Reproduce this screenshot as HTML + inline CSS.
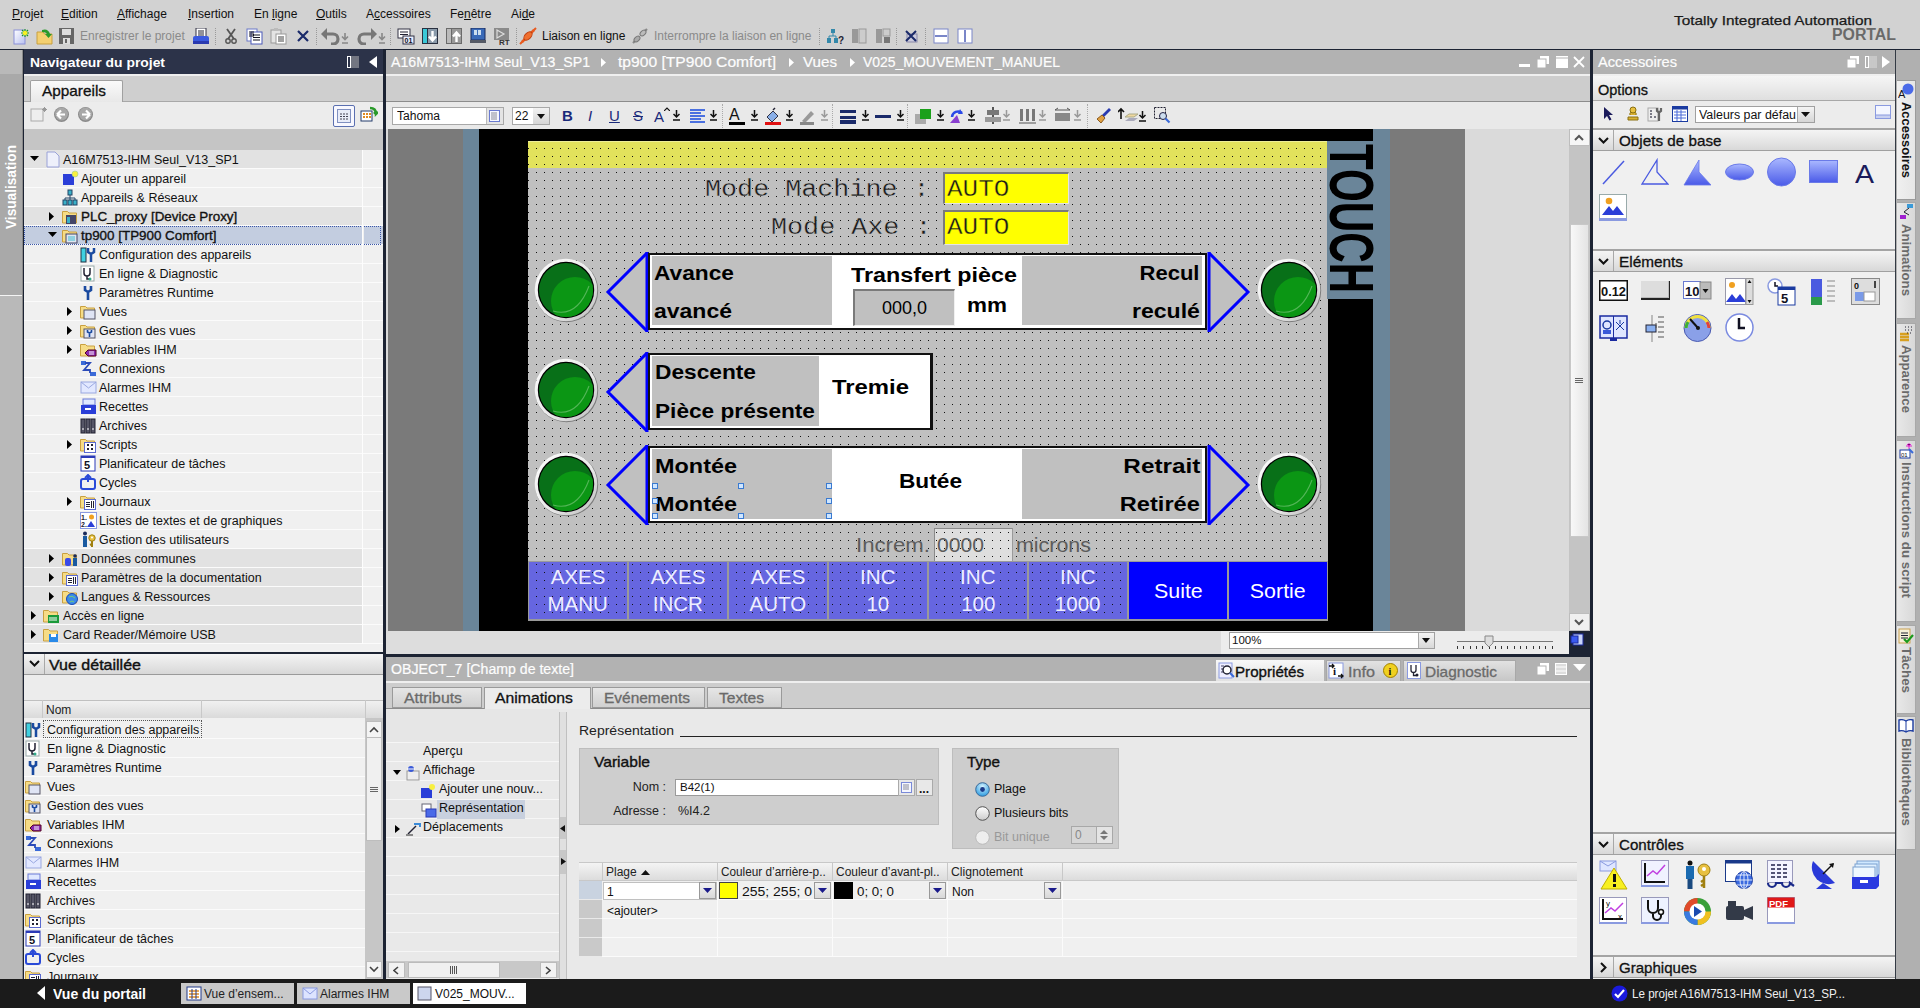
<!DOCTYPE html>
<html><head><meta charset="utf-8">
<style>
*{margin:0;padding:0;box-sizing:border-box}
html,body{width:1920px;height:1008px;overflow:hidden;background:#d2d2d2;font-family:"Liberation Sans",sans-serif;font-size:12px;color:#000;position:relative}
.a{position:absolute}
.t{position:absolute;white-space:nowrap;line-height:1}
.dots{background-image:radial-gradient(circle at 1px 1px,#111 0.9px,transparent 1.1px);background-size:8px 8px}
</style></head><body>

<div class="a" style="left:0px;top:0px;width:1920px;height:49px;background:#d2d2d2;"></div>
<div class="a" style="left:0px;top:49px;width:1920px;height:930px;background:#1c2333;"></div>
<div class="t" style="left:12.00px;top:7.80px;font-size:12px;color:#101010;">Projet</div>
<div class="a" style="left:12px;top:19px;width:8px;height:1px;background:#101010;"></div>
<div class="t" style="left:61.00px;top:7.80px;font-size:12px;color:#101010;">Edition</div>
<div class="a" style="left:61px;top:19px;width:8px;height:1px;background:#101010;"></div>
<div class="t" style="left:117.00px;top:7.80px;font-size:12px;color:#101010;">Affichage</div>
<div class="a" style="left:117px;top:19px;width:8px;height:1px;background:#101010;"></div>
<div class="t" style="left:188.00px;top:7.80px;font-size:12px;color:#101010;">Insertion</div>
<div class="a" style="left:188px;top:19px;width:3px;height:1px;background:#101010;"></div>
<div class="t" style="left:254.00px;top:7.80px;font-size:12px;color:#101010;">En ligne</div>
<div class="a" style="left:272px;top:19px;width:3px;height:1px;background:#101010;"></div>
<div class="t" style="left:316.00px;top:7.80px;font-size:12px;color:#101010;">Outils</div>
<div class="a" style="left:316px;top:19px;width:9px;height:1px;background:#101010;"></div>
<div class="t" style="left:366.00px;top:7.80px;font-size:12px;color:#101010;">Accessoires</div>
<div class="a" style="left:374px;top:19px;width:6px;height:1px;background:#101010;"></div>
<div class="t" style="left:450.00px;top:7.80px;font-size:12px;color:#101010;">Fenêtre</div>
<div class="a" style="left:464px;top:19px;width:7px;height:1px;background:#101010;"></div>
<div class="t" style="left:511.00px;top:7.80px;font-size:12px;color:#101010;">Aide</div>
<div class="a" style="left:522px;top:19px;width:7px;height:1px;background:#101010;"></div>
<svg class="a" style="left:13px;top:28px;" width="17" height="17" viewBox="0 0 17 17"><defs><linearGradient id="dg" x1="0" y1="0" x2="1" y2="1"><stop offset="0" stop-color="#fff"/><stop offset="1" stop-color="#b8c0f0"/></linearGradient></defs><rect x="1" y="2" width="11" height="14" fill="url(#dg)" stroke="#8a90d8"/><path d="M12 1v8M8 5h8M9 2l6 6M15 2l-6 6" stroke="#1a9a1a" stroke-width="1.1"/><circle cx="12" cy="5" r="2.3" fill="#f8f020"/></svg>
<svg class="a" style="left:36px;top:27px;" width="18" height="18" viewBox="0 0 18 18"><path d="M1 5h6l1.5 2H16v10H1z" fill="#f4d070" stroke="#c8a040"/><path d="M6 3q6-2 8 4h2l-3.5 4L9 7h2q-1-2-5-2z" fill="#2a9a2a"/></svg>
<svg class="a" style="left:59px;top:28px;" width="15" height="16" viewBox="0 0 15 16"><rect x="0" y="0" width="15" height="16" fill="#666"/><rect x="3" y="1" width="9" height="6" fill="#ddd"/><rect x="4" y="10" width="7" height="6" fill="#ddd"/><rect x="6" y="11" width="2" height="4" fill="#666"/></svg>
<div class="t" style="left:80.00px;top:30.30px;font-size:12px;color:#8a8a8a;">Enregistrer le projet</div>
<svg class="a" style="left:193px;top:28px;" width="16" height="16" viewBox="0 0 16 16"><rect x="3" y="0" width="10" height="9" fill="#fff" stroke="#334"/><path d="M5 3h6M5 5h6M5 7h6" stroke="#223"/><path d="M0 10q0-2 2-2h12q2 0 2 2v4H0z" fill="#3a5ae0"/><rect x="0" y="13" width="16" height="3" fill="#2a3ab0"/></svg>
<div class="a" style="left:215px;top:28px;width:1px;height:17px;border-left:1px dotted #9a9a9a"></div>
<svg class="a" style="left:224px;top:28px;" width="14" height="16" viewBox="0 0 14 16"><path d="M3 1l7 10M11 1L4 11" stroke="#555" stroke-width="1.8"/><circle cx="4" cy="13" r="2.2" fill="none" stroke="#555" stroke-width="1.4"/><circle cx="10" cy="13" r="2.2" fill="none" stroke="#555" stroke-width="1.4"/></svg>
<svg class="a" style="left:246px;top:28px;" width="17" height="17" viewBox="0 0 17 17"><rect x="1" y="1" width="10" height="12" fill="#fff" stroke="#6a78c8"/><rect x="5" y="4" width="11" height="12" fill="#fff" stroke="#4a58b8"/><path d="M3 4h5M3 6h5M3 8h5M7 7h7M7 9.5h7M7 12h7" stroke="#112" stroke-width="1.2"/></svg>
<svg class="a" style="left:270px;top:27px;" width="17" height="18" viewBox="0 0 17 18"><rect x="1" y="3" width="10" height="13" fill="#e4e4e4" stroke="#999"/><rect x="4" y="1" width="4" height="3" fill="#bbb"/><rect x="6" y="7" width="10" height="10" fill="#fff" stroke="#999"/><path d="M8 10h6M8 12h6M8 14h6" stroke="#444"/></svg>
<svg class="a" style="left:296px;top:29px;" width="14" height="14" viewBox="0 0 14 14"><path d="M2 2l10 10M12 2L2 12" stroke="#1a2a6a" stroke-width="2.2"/></svg>
<div class="a" style="left:316px;top:28px;width:1px;height:17px;border-left:1px dotted #9a9a9a"></div>
<svg class="a" style="left:321px;top:27px;" width="30" height="18" viewBox="0 0 30 18"><path d="M4 7h8a5 5 0 010 10h-2" fill="none" stroke="#777" stroke-width="3.2"/><path d="M0 7l6-6v12z" fill="#777"/><path d="M24 6v6M21 9.5l3 3 3-3M21 16h6" stroke="#888" stroke-width="1.6" fill="none"/></svg>
<svg class="a" style="left:356px;top:27px;" width="30" height="18" viewBox="0 0 30 18"><path d="M16 7H8a5 5 0 000 10h2" fill="none" stroke="#777" stroke-width="3.2"/><path d="M21 7l-6-6v12z" fill="#777"/><path d="M26 6v6M23 9.5l3 3 3-3M23 16h6" stroke="#888" stroke-width="1.6" fill="none"/></svg>
<div class="a" style="left:390px;top:28px;width:1px;height:17px;border-left:1px dotted #9a9a9a"></div>
<svg class="a" style="left:397px;top:28px;" width="18" height="17" viewBox="0 0 18 17"><rect x="1" y="1" width="12" height="9" fill="#fff" stroke="#334"/><path d="M3 4h8M3 6.5h8" stroke="#223" stroke-width="1.2"/><rect x="6" y="8" width="11" height="8" fill="#e8eeff" stroke="#334"/><text x="7.5" y="15" font-size="7" font-weight="bold" fill="#112" font-family="Liberation Sans">01</text></svg>
<svg class="a" style="left:422px;top:28px;" width="16" height="16" viewBox="0 0 16 16"><rect x="0" y="0" width="16" height="16" fill="#2a3040"/><rect x="1" y="1" width="4" height="14" fill="#3ac8d8"/><rect x="6" y="1" width="9" height="14" fill="#8a9aaa"/><path d="M10.5 3v9M7 8.5l3.5 4 3.5-4" stroke="#fff" stroke-width="2.4" fill="none"/></svg>
<svg class="a" style="left:446px;top:28px;" width="16" height="16" viewBox="0 0 16 16"><rect x="0" y="0" width="16" height="16" fill="#6a6a6a"/><rect x="1" y="1" width="4" height="14" fill="#bbb"/><rect x="6" y="1" width="9" height="14" fill="#999"/><path d="M10.5 14V5M7 8.5l3.5-4 3.5 4" stroke="#fff" stroke-width="2.4" fill="none"/></svg>
<svg class="a" style="left:470px;top:28px;" width="16" height="16" viewBox="0 0 16 16"><rect x="1" y="0" width="14" height="12" fill="#3a6ab8" stroke="#1a2a5a"/><rect x="4" y="2" width="3" height="5" fill="#cde"/><rect x="8" y="2" width="3" height="5" fill="#cde"/><rect x="0" y="12" width="16" height="3" fill="#555a66"/></svg>
<svg class="a" style="left:494px;top:28px;" width="16" height="17" viewBox="0 0 16 17"><rect x="0" y="0" width="15" height="12" fill="#8a8a8a"/><path d="M3 2l7 4-7 4z" fill="none" stroke="#ddd" stroke-width="1.2"/><text x="5" y="16.5" font-size="8" font-weight="bold" fill="#333" font-family="Liberation Sans">RT</text></svg>
<div class="a" style="left:516px;top:28px;width:1px;height:17px;border-left:1px dotted #9a9a9a"></div>
<svg class="a" style="left:519px;top:27px;" width="18" height="18" viewBox="0 0 18 18"><path d="M3 15l12-12" stroke="#e85a20" stroke-width="2.5"/><ellipse cx="9" cy="9" rx="5" ry="3" transform="rotate(-45 9 9)" fill="#f07030" stroke="#c04010"/><path d="M1 17l3-3M14 4l3-3" stroke="#e85a20" stroke-width="2"/></svg>
<div class="t" style="left:542.00px;top:30.30px;font-size:12px;color:#101010;">Liaison en ligne</div>
<svg class="a" style="left:631px;top:27px;" width="18" height="18" viewBox="0 0 18 18"><path d="M2 16l5-5M11 7l5-5" stroke="#888" stroke-width="2.2"/><ellipse cx="6" cy="12" rx="3.5" ry="2.2" transform="rotate(-45 6 12)" fill="#aaa" stroke="#777"/><ellipse cx="12" cy="6" rx="3.5" ry="2.2" transform="rotate(-45 12 6)" fill="#bbb" stroke="#777"/></svg>
<div class="t" style="left:654.00px;top:30.30px;font-size:12px;color:#8a8a8a;">Interrompre la liaison en ligne</div>
<div class="a" style="left:819px;top:28px;width:1px;height:17px;border-left:1px dotted #9a9a9a"></div>
<svg class="a" style="left:826px;top:28px;" width="20" height="17" viewBox="0 0 20 17"><rect x="5" y="1" width="4" height="4" fill="#38a"/><rect x="1" y="10" width="4" height="5" fill="#38a"/><rect x="8" y="10" width="4" height="5" fill="#38a"/><path d="M7 5v3M3 8h7v2M3 8v2" stroke="#38a" fill="none"/><text x="12" y="16" font-size="10" font-weight="bold" fill="#223" font-family="Liberation Sans">?</text></svg>
<svg class="a" style="left:851px;top:28px;" width="16" height="16" viewBox="0 0 16 16"><rect x="1" y="1" width="6" height="14" fill="#999"/><rect x="8" y="1" width="7" height="14" fill="#ccc" stroke="#999"/></svg>
<svg class="a" style="left:875px;top:28px;" width="16" height="16" viewBox="0 0 16 16"><rect x="1" y="1" width="6" height="14" fill="#999"/><rect x="8" y="1" width="7" height="7" fill="#ccc" stroke="#999"/><rect x="9" y="9" width="6" height="6" fill="#777"/></svg>
<div class="a" style="left:896px;top:28px;width:1px;height:17px;border-left:1px dotted #9a9a9a"></div>
<svg class="a" style="left:904px;top:28px;" width="16" height="16" viewBox="0 0 16 16"><rect x="3" y="6" width="10" height="8" fill="#ccd" stroke="#88a"/><path d="M2 3l10 10M12 3L2 13" stroke="#1a2a6a" stroke-width="2"/></svg>
<div class="a" style="left:925px;top:28px;width:1px;height:17px;border-left:1px dotted #9a9a9a"></div>
<svg class="a" style="left:933px;top:28px;" width="16" height="16" viewBox="0 0 16 16"><rect x="1" y="1" width="14" height="14" fill="#fff" stroke="#7a86c8"/><rect x="2" y="7" width="12" height="2" fill="#7a86c8"/></svg>
<svg class="a" style="left:957px;top:28px;" width="16" height="16" viewBox="0 0 16 16"><rect x="1" y="1" width="14" height="14" fill="#fff" stroke="#7a86c8"/><rect x="7" y="2" width="2" height="12" fill="#7a86c8"/></svg>
<div class="t" style="left:1674.00px;top:13.95px;font-size:13px;color:#1a1a1a;-webkit-text-stroke:0.25px #1a1a1a;transform:scaleX(1.1809);transform-origin:left top;">Totally Integrated Automation</div>
<div class="t" style="left:1831.50px;top:27.40px;font-size:16px;color:#6a6a6a;font-weight:bold;transform:scaleX(0.9909);transform-origin:left top;">PORTAL</div>
<div class="a" style="left:0px;top:50px;width:23px;height:929px;background:#b9b9b9;"></div>
<div class="a" style="left:0px;top:74px;width:23px;height:1px;background:#f4f4f4;"></div>
<div class="a" style="left:0px;top:74px;width:22px;height:221px;background:#a9a9a9;"></div>
<div class="a" style="left:0px;top:295px;width:23px;height:1px;background:#f4f4f4;"></div>
<div class="t" style="left:4.3px;top:229px;font-size:14px;font-weight:bold;color:#fff;transform:rotate(-90deg) scaleX(0.9755);transform-origin:left top;">Visualisation</div>
<div class="a" style="left:22px;top:50px;width:1px;height:929px;background:#8a8a8a;"></div>
<div class="a" style="left:24px;top:49px;width:359px;height:25px;background:#2c3349;"></div>
<div class="t" style="left:30.00px;top:55.52px;font-size:13.5px;color:#ffffff;font-weight:bold;transform:scaleX(1.0284);transform-origin:left top;">Navigateur du projet</div>
<svg class="a" style="left:347px;top:56px;" width="12" height="12" viewBox="0 0 12 12"><rect x="0.5" y="0.5" width="3" height="11" fill="none" stroke="#fff"/><path d="M5 0v12M7 0v12M9 0v12M11 0v12" stroke="#bbb"/></svg>
<svg class="a" style="left:369px;top:56px;" width="8" height="12" viewBox="0 0 8 12"><path d="M8 0v12L0 6z" fill="#fff"/></svg>
<div class="a" style="left:24px;top:74px;width:359px;height:2px;background:#eeeeee;"></div>
<div class="a" style="left:24px;top:76px;width:359px;height:25px;background:#cfcfcf;"></div>
<div class="a" style="left:30px;top:80px;width:93px;height:22px;background:#ececec;border:1px solid #a0a0a0;border-bottom:none;border-radius:2px 2px 0 0;background:linear-gradient(#fafafa,#e8e8e8)"></div>
<div class="t" style="left:42.00px;top:83.67px;font-size:14.5px;color:#111;-webkit-text-stroke:0.3px #111;transform:scaleX(1.0588);transform-origin:left top;">Appareils</div>
<div class="a" style="left:24px;top:101px;width:6px;height:1px;background:#a8a8a8;"></div>
<div class="a" style="left:123px;top:101px;width:260px;height:1px;background:#a8a8a8;"></div>
<div class="a" style="left:24px;top:102px;width:359px;height:27px;background:#ececec;"></div>
<svg class="a" style="left:30px;top:106px;" width="18" height="17" viewBox="0 0 18 17"><rect x="1" y="3" width="12" height="12" fill="#eee" stroke="#aaa"/><path d="M13 2l3 3M16 2l-3 3M14.5 1v5M12 3.5h5" stroke="#999"/></svg>
<svg class="a" style="left:53px;top:106px;" width="17" height="17" viewBox="0 0 17 17"><circle cx="8.5" cy="8.5" r="7.5" fill="#8a8a8a"/><circle cx="8.5" cy="8" r="6.5" fill="#a8a8a8"/><path d="M4 8.5h8M4 8.5l4-4M4 8.5l4 4" stroke="#fff" stroke-width="2.2" fill="none"/></svg>
<svg class="a" style="left:77px;top:106px;" width="17" height="17" viewBox="0 0 17 17"><circle cx="8.5" cy="8.5" r="7.5" fill="#8a8a8a"/><circle cx="8.5" cy="8" r="6.5" fill="#a8a8a8"/><path d="M13 8.5H5M13 8.5l-4-4M13 8.5l-4 4" stroke="#fff" stroke-width="2.2" fill="none"/></svg>
<div class="a" style="left:333px;top:105px;width:22px;height:22px;background:#f8f8ff;border:1px solid #5a6fb0;border-radius:2px"></div>
<svg class="a" style="left:337px;top:109px;" width="14" height="14" viewBox="0 0 14 14"><rect x="0.5" y="0.5" width="13" height="13" fill="#e8ecf8" stroke="#8090c0"/><path d="M3 5h8M3 7.5h8M3 10h8" stroke="#445" stroke-dasharray="2 1"/></svg>
<svg class="a" style="left:360px;top:106px;" width="18" height="17" viewBox="0 0 18 17"><rect x="1" y="5" width="11" height="10" fill="#fff" stroke="#223a6a"/><path d="M3 8h2M6 8h2M9 8h2M3 11h2M6 11h2M9 11h2" stroke="#e08a20" stroke-width="2"/><path d="M10 2q6 0 6 6l2-2M16 8l-2-2" stroke="#2a9a2a" stroke-width="2.5" fill="none"/></svg>
<div class="a" style="left:24px;top:129px;width:359px;height:21px;background:#c5c5c5;"></div>
<div class="a" style="left:24px;top:150px;width:359px;height:502px;background:#f0f0f0;"></div>
<div class="a" style="left:24px;top:150px;width:338px;height:18px;background:#e2e2e2;"></div>
<div class="a" style="left:364px;top:150px;width:19px;height:18px;background:#f0f0f0;"></div>
<div class="a" style="left:24px;top:168px;width:359px;height:1px;background:#fbfbfb;"></div>
<svg class="a" style="left:30px;top:156px;" width="9" height="6" viewBox="0 0 9 6"><path d="M0 0h9L4.5 5z" fill="#000"/></svg>
<svg class="a" style="left:46px;top:151px;" width="14" height="17" viewBox="0 0 14 17"><path d="M1 1h8l4 4v11H1z" fill="#eef0fb" stroke="#9aa2d8"/></svg>
<div class="t" style="left:63.00px;top:153.88px;font-size:12.5px;color:#111;">A16M7513-IHM Seul_V13_SP1</div>
<div class="a" style="left:24px;top:169px;width:338px;height:18px;background:#f0f0f0;"></div>
<div class="a" style="left:364px;top:169px;width:19px;height:18px;background:#f0f0f0;"></div>
<div class="a" style="left:24px;top:187px;width:359px;height:1px;background:#fbfbfb;"></div>
<svg class="a" style="left:62px;top:170px;" width="17" height="17" viewBox="0 0 17 17"><rect x="1" y="4" width="11" height="11" fill="#2a3ed8"/><circle cx="13" cy="4" r="3" fill="#f8f040" stroke="#9c9" stroke-width="0.6"/></svg>
<div class="t" style="left:81.00px;top:172.88px;font-size:12.5px;color:#111;">Ajouter un appareil</div>
<div class="a" style="left:24px;top:188px;width:338px;height:18px;background:#f0f0f0;"></div>
<div class="a" style="left:364px;top:188px;width:19px;height:18px;background:#f0f0f0;"></div>
<div class="a" style="left:24px;top:206px;width:359px;height:1px;background:#fbfbfb;"></div>
<svg class="a" style="left:62px;top:189px;" width="17" height="17" viewBox="0 0 17 17"><rect x="6" y="1" width="4" height="5" fill="#3ab0c8" stroke="#246"/><path d="M8 6v3M3 9h10M3 9v2M8 9v2M13 9v2" stroke="#246"/><rect x="1" y="11" width="4" height="5" fill="#3ab0c8" stroke="#246"/><rect x="6" y="11" width="4" height="5" fill="#3ab0c8" stroke="#246"/><rect x="11" y="11" width="4" height="5" fill="#3ab0c8" stroke="#246"/></svg>
<div class="t" style="left:81.00px;top:191.88px;font-size:12.5px;color:#111;">Appareils &amp; Réseaux</div>
<div class="a" style="left:24px;top:207px;width:338px;height:18px;background:#e2e2e2;"></div>
<div class="a" style="left:364px;top:207px;width:19px;height:18px;background:#f0f0f0;"></div>
<div class="a" style="left:24px;top:225px;width:359px;height:1px;background:#fbfbfb;"></div>
<svg class="a" style="left:49px;top:212px;" width="6" height="9" viewBox="0 0 6 9"><path d="M0 0v9L5 4.5z" fill="#000"/></svg>
<svg class="a" style="left:62px;top:208px;" width="17" height="17" viewBox="0 0 17 17"><path d="M0.5 3.5h5l1.5 1.5h7.5v10h-14z" fill="#f6dc86" stroke="#c9a040"/><rect x="4" y="7" width="10" height="9" fill="#446"/><rect x="5" y="9" width="3" height="6" fill="#3ab0c8"/></svg>
<div class="t" style="left:81.00px;top:210.11px;font-size:13.4px;color:#111;-webkit-text-stroke:0.35px #111;">PLC_proxy [Device Proxy]</div>
<div class="a" style="left:24px;top:226px;width:338px;height:18px;background:#c3cde0;"></div>
<div class="a" style="left:364px;top:226px;width:19px;height:18px;background:#c3cde0;"></div>
<div class="a" style="left:24px;top:244px;width:359px;height:1px;background:#fbfbfb;"></div>
<div class="a" style="left:24px;top:226px;width:357px;height:19px;border:1px dotted #3a56a8"></div>
<svg class="a" style="left:48px;top:232px;" width="9" height="6" viewBox="0 0 9 6"><path d="M0 0h9L4.5 5z" fill="#000"/></svg>
<svg class="a" style="left:62px;top:227px;" width="17" height="17" viewBox="0 0 17 17"><path d="M0.5 3.5h5l1.5 1.5h7.5v10h-14z" fill="#f6dc86" stroke="#c9a040"/><rect x="4" y="7" width="11" height="9" fill="#dfe6f0" stroke="#446"/><rect x="6" y="9" width="7" height="5" fill="#8fd0e0"/></svg>
<div class="t" style="left:81.00px;top:229.11px;font-size:13.4px;color:#111;-webkit-text-stroke:0.35px #111;">tp900 [TP900 Comfort]</div>
<div class="a" style="left:24px;top:245px;width:338px;height:18px;background:#f0f0f0;"></div>
<div class="a" style="left:364px;top:245px;width:19px;height:18px;background:#f0f0f0;"></div>
<div class="a" style="left:24px;top:263px;width:359px;height:1px;background:#fbfbfb;"></div>
<svg class="a" style="left:80px;top:246px;" width="17" height="17" viewBox="0 0 17 17"><rect x="1" y="2" width="5" height="14" fill="#40d0e0" stroke="#234"/><path d="M11 16V7M8 2v4l3 2 3-2V2" stroke="#1a4aa0" stroke-width="2.5" fill="none"/></svg>
<div class="t" style="left:99.00px;top:248.88px;font-size:12.5px;color:#111;">Configuration des appareils</div>
<div class="a" style="left:24px;top:264px;width:338px;height:18px;background:#f0f0f0;"></div>
<div class="a" style="left:364px;top:264px;width:19px;height:18px;background:#f0f0f0;"></div>
<div class="a" style="left:24px;top:282px;width:359px;height:1px;background:#fbfbfb;"></div>
<svg class="a" style="left:80px;top:265px;" width="17" height="17" viewBox="0 0 17 17"><rect x="1" y="1" width="13" height="15" fill="#fff" stroke="#9aa"/><path d="M4 3v5a3 3 0 006 0V3M7 11v3h3" stroke="#223" stroke-width="1.5" fill="none"/><circle cx="10" cy="14" r="1.5" fill="#3a8"/></svg>
<div class="t" style="left:99.00px;top:267.88px;font-size:12.5px;color:#111;">En ligne &amp; Diagnostic</div>
<div class="a" style="left:24px;top:283px;width:338px;height:18px;background:#f0f0f0;"></div>
<div class="a" style="left:364px;top:283px;width:19px;height:18px;background:#f0f0f0;"></div>
<div class="a" style="left:24px;top:301px;width:359px;height:1px;background:#fbfbfb;"></div>
<svg class="a" style="left:80px;top:284px;" width="17" height="17" viewBox="0 0 17 17"><path d="M8 16V8M5 2v4l3 2 3-2V2" stroke="#1a4aa0" stroke-width="2.6" fill="none"/></svg>
<div class="t" style="left:99.00px;top:286.88px;font-size:12.5px;color:#111;">Paramètres Runtime</div>
<div class="a" style="left:24px;top:302px;width:338px;height:18px;background:#f0f0f0;"></div>
<div class="a" style="left:364px;top:302px;width:19px;height:18px;background:#f0f0f0;"></div>
<div class="a" style="left:24px;top:320px;width:359px;height:1px;background:#fbfbfb;"></div>
<svg class="a" style="left:67px;top:307px;" width="6" height="9" viewBox="0 0 6 9"><path d="M0 0v9L5 4.5z" fill="#000"/></svg>
<svg class="a" style="left:80px;top:303px;" width="17" height="17" viewBox="0 0 17 17"><path d="M0.5 3.5h5l1.5 1.5h7.5v10h-14z" fill="#f6dc86" stroke="#c9a040"/><rect x="4" y="7" width="11" height="9" fill="#dfe4f4" stroke="#556"/></svg>
<div class="t" style="left:99.00px;top:305.88px;font-size:12.5px;color:#111;">Vues</div>
<div class="a" style="left:24px;top:321px;width:338px;height:18px;background:#f0f0f0;"></div>
<div class="a" style="left:364px;top:321px;width:19px;height:18px;background:#f0f0f0;"></div>
<div class="a" style="left:24px;top:339px;width:359px;height:1px;background:#fbfbfb;"></div>
<svg class="a" style="left:67px;top:326px;" width="6" height="9" viewBox="0 0 6 9"><path d="M0 0v9L5 4.5z" fill="#000"/></svg>
<svg class="a" style="left:80px;top:322px;" width="17" height="17" viewBox="0 0 17 17"><path d="M0.5 3.5h5l1.5 1.5h7.5v10h-14z" fill="#f6dc86" stroke="#c9a040"/><rect x="4" y="7" width="11" height="9" fill="#dfe4f4" stroke="#556"/><path d="M9.5 15v-4M7.5 8v2l2 1 2-1V8" stroke="#1a4aa0" stroke-width="1.6" fill="none"/></svg>
<div class="t" style="left:99.00px;top:324.88px;font-size:12.5px;color:#111;">Gestion des vues</div>
<div class="a" style="left:24px;top:340px;width:338px;height:18px;background:#f0f0f0;"></div>
<div class="a" style="left:364px;top:340px;width:19px;height:18px;background:#f0f0f0;"></div>
<div class="a" style="left:24px;top:358px;width:359px;height:1px;background:#fbfbfb;"></div>
<svg class="a" style="left:67px;top:345px;" width="6" height="9" viewBox="0 0 6 9"><path d="M0 0v9L5 4.5z" fill="#000"/></svg>
<svg class="a" style="left:80px;top:341px;" width="17" height="17" viewBox="0 0 17 17"><path d="M0.5 3.5h5l1.5 1.5h7.5v10h-14z" fill="#f6dc86" stroke="#c9a040"/><path d="M5 12l3-3h8v6H8z" fill="#8a2ab0" stroke="#502"/><path d="M9 11h5M9 13h5" stroke="#fff"/></svg>
<div class="t" style="left:99.00px;top:343.88px;font-size:12.5px;color:#111;">Variables IHM</div>
<div class="a" style="left:24px;top:359px;width:338px;height:18px;background:#f0f0f0;"></div>
<div class="a" style="left:364px;top:359px;width:19px;height:18px;background:#f0f0f0;"></div>
<div class="a" style="left:24px;top:377px;width:359px;height:1px;background:#fbfbfb;"></div>
<svg class="a" style="left:80px;top:360px;" width="17" height="17" viewBox="0 0 17 17"><rect x="1" y="1" width="5" height="4" fill="#3a6ad8"/><rect x="10" y="12" width="6" height="4" fill="#3a6ad8"/><path d="M5 3h5l-6 7h6v3" stroke="#2a4ab8" stroke-width="1.8" fill="none"/></svg>
<div class="t" style="left:99.00px;top:362.88px;font-size:12.5px;color:#111;">Connexions</div>
<div class="a" style="left:24px;top:378px;width:338px;height:18px;background:#f0f0f0;"></div>
<div class="a" style="left:364px;top:378px;width:19px;height:18px;background:#f0f0f0;"></div>
<div class="a" style="left:24px;top:396px;width:359px;height:1px;background:#fbfbfb;"></div>
<svg class="a" style="left:80px;top:379px;" width="17" height="17" viewBox="0 0 17 17"><rect x="1" y="3" width="15" height="11" fill="#e2e8ff" stroke="#9aa8e0"/><path d="M1 3l7.5 6 7.5-6" fill="none" stroke="#9aa8e0"/></svg>
<div class="t" style="left:99.00px;top:381.88px;font-size:12.5px;color:#111;">Alarmes IHM</div>
<div class="a" style="left:24px;top:397px;width:338px;height:18px;background:#f0f0f0;"></div>
<div class="a" style="left:364px;top:397px;width:19px;height:18px;background:#f0f0f0;"></div>
<div class="a" style="left:24px;top:415px;width:359px;height:1px;background:#fbfbfb;"></div>
<svg class="a" style="left:80px;top:398px;" width="17" height="17" viewBox="0 0 17 17"><rect x="3" y="1" width="12" height="6" fill="#dfe8ff" stroke="#6a7ad8"/><rect x="1" y="7" width="15" height="9" fill="#2a3ed8"/><rect x="5" y="10" width="6" height="2" fill="#fff"/></svg>
<div class="t" style="left:99.00px;top:400.88px;font-size:12.5px;color:#111;">Recettes</div>
<div class="a" style="left:24px;top:416px;width:338px;height:18px;background:#f0f0f0;"></div>
<div class="a" style="left:364px;top:416px;width:19px;height:18px;background:#f0f0f0;"></div>
<div class="a" style="left:24px;top:434px;width:359px;height:1px;background:#fbfbfb;"></div>
<svg class="a" style="left:80px;top:417px;" width="17" height="17" viewBox="0 0 17 17"><rect x="1" y="2" width="4" height="14" fill="#556" stroke="#223"/><rect x="6" y="2" width="4" height="14" fill="#556" stroke="#223"/><rect x="11" y="2" width="4" height="14" fill="#556" stroke="#223"/><path d="M3 11v2M8 11v2M13 11v2" stroke="#fff"/></svg>
<div class="t" style="left:99.00px;top:419.88px;font-size:12.5px;color:#111;">Archives</div>
<div class="a" style="left:24px;top:435px;width:338px;height:18px;background:#f0f0f0;"></div>
<div class="a" style="left:364px;top:435px;width:19px;height:18px;background:#f0f0f0;"></div>
<div class="a" style="left:24px;top:453px;width:359px;height:1px;background:#fbfbfb;"></div>
<svg class="a" style="left:67px;top:440px;" width="6" height="9" viewBox="0 0 6 9"><path d="M0 0v9L5 4.5z" fill="#000"/></svg>
<svg class="a" style="left:80px;top:436px;" width="17" height="17" viewBox="0 0 17 17"><path d="M0.5 3.5h5l1.5 1.5h7.5v10h-14z" fill="#f6dc86" stroke="#c9a040"/><rect x="4.5" y="6.5" width="11" height="10" fill="#fff" stroke="#5a6ad0"/><rect x="7" y="8" width="2" height="2" fill="#223"/><rect x="11" y="8" width="2" height="2" fill="#223"/><rect x="7" y="12" width="2" height="2" fill="#223"/><rect x="11" y="12" width="2" height="2" fill="#223"/></svg>
<div class="t" style="left:99.00px;top:438.88px;font-size:12.5px;color:#111;">Scripts</div>
<div class="a" style="left:24px;top:454px;width:338px;height:18px;background:#f0f0f0;"></div>
<div class="a" style="left:364px;top:454px;width:19px;height:18px;background:#f0f0f0;"></div>
<div class="a" style="left:24px;top:472px;width:359px;height:1px;background:#fbfbfb;"></div>
<svg class="a" style="left:80px;top:455px;" width="17" height="17" viewBox="0 0 17 17"><rect x="1" y="1" width="14" height="15" fill="#fff" stroke="#2a3ab8"/><rect x="1" y="1" width="14" height="2" fill="#2a3ab8"/><text x="4" y="14" font-size="11" font-weight="bold" fill="#112" font-family="Liberation Sans">5</text></svg>
<div class="t" style="left:99.00px;top:457.88px;font-size:12.5px;color:#111;">Planificateur de tâches</div>
<div class="a" style="left:24px;top:473px;width:338px;height:18px;background:#f0f0f0;"></div>
<div class="a" style="left:364px;top:473px;width:19px;height:18px;background:#f0f0f0;"></div>
<div class="a" style="left:24px;top:491px;width:359px;height:1px;background:#fbfbfb;"></div>
<svg class="a" style="left:80px;top:474px;" width="17" height="17" viewBox="0 0 17 17"><rect x="1" y="5" width="14" height="10" rx="2" fill="none" stroke="#2a4ad8" stroke-width="2"/><path d="M8 8V2M5 4l3-3 3 3" stroke="#2a4ad8" stroke-width="2" fill="none"/></svg>
<div class="t" style="left:99.00px;top:476.88px;font-size:12.5px;color:#111;">Cycles</div>
<div class="a" style="left:24px;top:492px;width:338px;height:18px;background:#f0f0f0;"></div>
<div class="a" style="left:364px;top:492px;width:19px;height:18px;background:#f0f0f0;"></div>
<div class="a" style="left:24px;top:510px;width:359px;height:1px;background:#fbfbfb;"></div>
<svg class="a" style="left:67px;top:497px;" width="6" height="9" viewBox="0 0 6 9"><path d="M0 0v9L5 4.5z" fill="#000"/></svg>
<svg class="a" style="left:80px;top:493px;" width="17" height="17" viewBox="0 0 17 17"><path d="M0.5 3.5h5l1.5 1.5h7.5v10h-14z" fill="#f6dc86" stroke="#c9a040"/><rect x="4.5" y="6.5" width="11" height="10" fill="#fff" stroke="#5a6ad0"/><path d="M6 9.5h4M6 11.5h4M6 13.5h4M11.5 8v7M13.5 8v7" stroke="#223"/></svg>
<div class="t" style="left:99.00px;top:495.88px;font-size:12.5px;color:#111;">Journaux</div>
<div class="a" style="left:24px;top:511px;width:338px;height:18px;background:#f0f0f0;"></div>
<div class="a" style="left:364px;top:511px;width:19px;height:18px;background:#f0f0f0;"></div>
<div class="a" style="left:24px;top:529px;width:359px;height:1px;background:#fbfbfb;"></div>
<svg class="a" style="left:80px;top:512px;" width="17" height="17" viewBox="0 0 17 17"><rect x="0.5" y="0.5" width="16" height="16" fill="#fff" stroke="#8a9ae0"/><text x="1" y="7.5" font-size="7" font-weight="bold" fill="#223" font-family="Liberation Sans">1.</text><text x="1" y="15" font-size="7" font-weight="bold" fill="#223" font-family="Liberation Sans">2.</text><circle cx="11.5" cy="5" r="2.5" fill="#f0a020"/><path d="M7 15l4-6 4 6z" fill="#2a3ed8"/></svg>
<div class="t" style="left:99.00px;top:514.88px;font-size:12.5px;color:#111;">Listes de textes et de graphiques</div>
<div class="a" style="left:24px;top:530px;width:338px;height:18px;background:#f0f0f0;"></div>
<div class="a" style="left:364px;top:530px;width:19px;height:18px;background:#f0f0f0;"></div>
<div class="a" style="left:24px;top:548px;width:359px;height:1px;background:#fbfbfb;"></div>
<svg class="a" style="left:80px;top:531px;" width="17" height="17" viewBox="0 0 17 17"><circle cx="5" cy="2.5" r="2" fill="#1a2a5a"/><rect x="3" y="5" width="4" height="11" fill="#1a5aa0"/><circle cx="12" cy="7" r="3.2" fill="#e8c040" stroke="#a08010"/><circle cx="12" cy="6.5" r="1" fill="#fff"/><path d="M12 10v6M12 13l-2 1" stroke="#a08010" stroke-width="2"/></svg>
<div class="t" style="left:99.00px;top:533.88px;font-size:12.5px;color:#111;">Gestion des utilisateurs</div>
<div class="a" style="left:24px;top:549px;width:338px;height:18px;background:#e2e2e2;"></div>
<div class="a" style="left:364px;top:549px;width:19px;height:18px;background:#f0f0f0;"></div>
<div class="a" style="left:24px;top:567px;width:359px;height:1px;background:#fbfbfb;"></div>
<svg class="a" style="left:49px;top:554px;" width="6" height="9" viewBox="0 0 6 9"><path d="M0 0v9L5 4.5z" fill="#000"/></svg>
<svg class="a" style="left:62px;top:550px;" width="17" height="17" viewBox="0 0 17 17"><path d="M0.5 3.5h5l1.5 1.5h7.5v10h-14z" fill="#f6dc86" stroke="#c9a040"/><rect x="3" y="8" width="6" height="8" rx="2" fill="#3a4ae8"/><circle cx="13" cy="6" r="1.8" fill="#1a2a5a"/><rect x="11" y="8" width="4" height="8" fill="#1a5aa0"/></svg>
<div class="t" style="left:81.00px;top:552.88px;font-size:12.5px;color:#111;">Données communes</div>
<div class="a" style="left:24px;top:568px;width:338px;height:18px;background:#e2e2e2;"></div>
<div class="a" style="left:364px;top:568px;width:19px;height:18px;background:#f0f0f0;"></div>
<div class="a" style="left:24px;top:586px;width:359px;height:1px;background:#fbfbfb;"></div>
<svg class="a" style="left:49px;top:573px;" width="6" height="9" viewBox="0 0 6 9"><path d="M0 0v9L5 4.5z" fill="#000"/></svg>
<svg class="a" style="left:62px;top:569px;" width="17" height="17" viewBox="0 0 17 17"><path d="M0.5 3.5h5l1.5 1.5h7.5v10h-14z" fill="#f6dc86" stroke="#c9a040"/><rect x="4.5" y="6.5" width="11" height="10" fill="#fff" stroke="#5a6ad0"/><path d="M6 9.5h4M6 11.5h4M6 13.5h4M11.5 8v7M13.5 8v7" stroke="#223"/></svg>
<div class="t" style="left:81.00px;top:571.88px;font-size:12.5px;color:#111;">Paramètres de la documentation</div>
<div class="a" style="left:24px;top:587px;width:338px;height:18px;background:#e2e2e2;"></div>
<div class="a" style="left:364px;top:587px;width:19px;height:18px;background:#f0f0f0;"></div>
<div class="a" style="left:24px;top:605px;width:359px;height:1px;background:#fbfbfb;"></div>
<svg class="a" style="left:49px;top:592px;" width="6" height="9" viewBox="0 0 6 9"><path d="M0 0v9L5 4.5z" fill="#000"/></svg>
<svg class="a" style="left:62px;top:588px;" width="17" height="17" viewBox="0 0 17 17"><path d="M0.5 3.5h5l1.5 1.5h7.5v10h-14z" fill="#f6dc86" stroke="#c9a040"/><circle cx="10" cy="11" r="5.5" fill="#3a8ae8" stroke="#1a4ab8"/><path d="M7 9q3-2 6 1M8 14q2-2 4 0" stroke="#7c7" fill="none"/></svg>
<div class="t" style="left:81.00px;top:590.88px;font-size:12.5px;color:#111;">Langues &amp; Ressources</div>
<div class="a" style="left:24px;top:606px;width:338px;height:18px;background:#e2e2e2;"></div>
<div class="a" style="left:364px;top:606px;width:19px;height:18px;background:#f0f0f0;"></div>
<div class="a" style="left:24px;top:624px;width:359px;height:1px;background:#fbfbfb;"></div>
<svg class="a" style="left:31px;top:611px;" width="6" height="9" viewBox="0 0 6 9"><path d="M0 0v9L5 4.5z" fill="#000"/></svg>
<svg class="a" style="left:43px;top:607px;" width="17" height="17" viewBox="0 0 17 17"><path d="M0.5 3.5h5l1.5 1.5h7.5v10h-14z" fill="#f6dc86" stroke="#c9a040"/><rect x="5" y="8" width="11" height="8" fill="#1a9a3a"/><path d="M7 10v4M9 10v4M11 10v4M13 10v4" stroke="#fff"/></svg>
<div class="t" style="left:63.00px;top:609.88px;font-size:12.5px;color:#111;">Accès en ligne</div>
<div class="a" style="left:24px;top:625px;width:338px;height:18px;background:#e2e2e2;"></div>
<div class="a" style="left:364px;top:625px;width:19px;height:18px;background:#f0f0f0;"></div>
<div class="a" style="left:24px;top:643px;width:359px;height:1px;background:#fbfbfb;"></div>
<svg class="a" style="left:31px;top:630px;" width="6" height="9" viewBox="0 0 6 9"><path d="M0 0v9L5 4.5z" fill="#000"/></svg>
<svg class="a" style="left:43px;top:626px;" width="17" height="17" viewBox="0 0 17 17"><path d="M0.5 3.5h5l1.5 1.5h7.5v10h-14z" fill="#f6dc86" stroke="#c9a040"/><rect x="6" y="8" width="9" height="8" fill="#2a8ae8"/><rect x="8" y="8" width="5" height="3" fill="#fff"/></svg>
<div class="t" style="left:63.00px;top:628.88px;font-size:12.5px;color:#111;">Card Reader/Mémoire USB</div>
<div class="a" style="left:362px;top:150px;width:1px;height:494px;background:#fdfdfd;"></div>
<div class="a" style="left:24px;top:652px;width:359px;height:2px;background:#1c2333;"></div>
<div class="a" style="left:24px;top:654px;width:359px;height:21px;background:#dcdcdc;background:linear-gradient(#f4f4f4,#d6d6d6)"></div>
<div class="a" style="left:44px;top:654px;width:1px;height:21px;background:#a8a8a8;"></div>
<div class="a" style="left:24px;top:674px;width:359px;height:1px;background:#9a9a9a;"></div>
<svg class="a" style="left:29px;top:660px;" width="11" height="8" viewBox="0 0 11 8"><path d="M1 1l4.5 4.5L10 1" stroke="#111" stroke-width="2" fill="none"/></svg>
<div class="t" style="left:49.00px;top:657.25px;font-size:15px;color:#111;-webkit-text-stroke:0.4px #111;transform:scaleX(1.0674);transform-origin:left top;">Vue détaillée</div>
<div class="a" style="left:24px;top:675px;width:359px;height:25px;background:#ececec;"></div>
<div class="a" style="left:24px;top:700px;width:359px;height:18px;background:#e0e0e0;background:linear-gradient(#f2f2f2,#dadada)"></div>
<div class="a" style="left:24px;top:700px;width:359px;height:1px;background:#c0c0c0;"></div>
<div class="a" style="left:42px;top:700px;width:1px;height:18px;background:#c8c8c8;"></div>
<div class="a" style="left:201px;top:700px;width:1px;height:18px;background:#c8c8c8;"></div>
<div class="a" style="left:365px;top:700px;width:1px;height:18px;background:#c8c8c8;"></div>
<div class="t" style="left:46.00px;top:703.80px;font-size:12px;color:#222;">Nom</div>
<div class="a" style="left:24px;top:718px;width:341px;height:261px;background:#f0f0f0;"></div>
<div class="a" style="left:24px;top:738px;width:341px;height:1px;background:#fbfbfb;"></div>
<svg class="a" style="left:25px;top:721px;" width="17" height="17" viewBox="0 0 17 17"><rect x="1" y="2" width="5" height="14" fill="#40d0e0" stroke="#234"/><path d="M11 16V7M8 2v4l3 2 3-2V2" stroke="#1a4aa0" stroke-width="2.5" fill="none"/></svg>
<div class="t" style="left:47.00px;top:723.88px;font-size:12.5px;color:#111;">Configuration des appareils</div>
<div class="a" style="left:24px;top:757px;width:341px;height:1px;background:#fbfbfb;"></div>
<svg class="a" style="left:25px;top:740px;" width="17" height="17" viewBox="0 0 17 17"><rect x="1" y="1" width="13" height="15" fill="#fff" stroke="#9aa"/><path d="M4 3v5a3 3 0 006 0V3M7 11v3h3" stroke="#223" stroke-width="1.5" fill="none"/><circle cx="10" cy="14" r="1.5" fill="#3a8"/></svg>
<div class="t" style="left:47.00px;top:742.88px;font-size:12.5px;color:#111;">En ligne &amp; Diagnostic</div>
<div class="a" style="left:24px;top:776px;width:341px;height:1px;background:#fbfbfb;"></div>
<svg class="a" style="left:25px;top:759px;" width="17" height="17" viewBox="0 0 17 17"><path d="M8 16V8M5 2v4l3 2 3-2V2" stroke="#1a4aa0" stroke-width="2.6" fill="none"/></svg>
<div class="t" style="left:47.00px;top:761.88px;font-size:12.5px;color:#111;">Paramètres Runtime</div>
<div class="a" style="left:24px;top:795px;width:341px;height:1px;background:#fbfbfb;"></div>
<svg class="a" style="left:25px;top:778px;" width="17" height="17" viewBox="0 0 17 17"><path d="M0.5 3.5h5l1.5 1.5h7.5v10h-14z" fill="#f6dc86" stroke="#c9a040"/><rect x="4" y="7" width="11" height="9" fill="#dfe4f4" stroke="#556"/></svg>
<div class="t" style="left:47.00px;top:780.88px;font-size:12.5px;color:#111;">Vues</div>
<div class="a" style="left:24px;top:814px;width:341px;height:1px;background:#fbfbfb;"></div>
<svg class="a" style="left:25px;top:797px;" width="17" height="17" viewBox="0 0 17 17"><path d="M0.5 3.5h5l1.5 1.5h7.5v10h-14z" fill="#f6dc86" stroke="#c9a040"/><rect x="4" y="7" width="11" height="9" fill="#dfe4f4" stroke="#556"/><path d="M9.5 15v-4M7.5 8v2l2 1 2-1V8" stroke="#1a4aa0" stroke-width="1.6" fill="none"/></svg>
<div class="t" style="left:47.00px;top:799.88px;font-size:12.5px;color:#111;">Gestion des vues</div>
<div class="a" style="left:24px;top:833px;width:341px;height:1px;background:#fbfbfb;"></div>
<svg class="a" style="left:25px;top:816px;" width="17" height="17" viewBox="0 0 17 17"><path d="M0.5 3.5h5l1.5 1.5h7.5v10h-14z" fill="#f6dc86" stroke="#c9a040"/><path d="M5 12l3-3h8v6H8z" fill="#8a2ab0" stroke="#502"/><path d="M9 11h5M9 13h5" stroke="#fff"/></svg>
<div class="t" style="left:47.00px;top:818.88px;font-size:12.5px;color:#111;">Variables IHM</div>
<div class="a" style="left:24px;top:852px;width:341px;height:1px;background:#fbfbfb;"></div>
<svg class="a" style="left:25px;top:835px;" width="17" height="17" viewBox="0 0 17 17"><rect x="1" y="1" width="5" height="4" fill="#3a6ad8"/><rect x="10" y="12" width="6" height="4" fill="#3a6ad8"/><path d="M5 3h5l-6 7h6v3" stroke="#2a4ab8" stroke-width="1.8" fill="none"/></svg>
<div class="t" style="left:47.00px;top:837.88px;font-size:12.5px;color:#111;">Connexions</div>
<div class="a" style="left:24px;top:871px;width:341px;height:1px;background:#fbfbfb;"></div>
<svg class="a" style="left:25px;top:854px;" width="17" height="17" viewBox="0 0 17 17"><rect x="1" y="3" width="15" height="11" fill="#e2e8ff" stroke="#9aa8e0"/><path d="M1 3l7.5 6 7.5-6" fill="none" stroke="#9aa8e0"/></svg>
<div class="t" style="left:47.00px;top:856.88px;font-size:12.5px;color:#111;">Alarmes IHM</div>
<div class="a" style="left:24px;top:890px;width:341px;height:1px;background:#fbfbfb;"></div>
<svg class="a" style="left:25px;top:873px;" width="17" height="17" viewBox="0 0 17 17"><rect x="3" y="1" width="12" height="6" fill="#dfe8ff" stroke="#6a7ad8"/><rect x="1" y="7" width="15" height="9" fill="#2a3ed8"/><rect x="5" y="10" width="6" height="2" fill="#fff"/></svg>
<div class="t" style="left:47.00px;top:875.88px;font-size:12.5px;color:#111;">Recettes</div>
<div class="a" style="left:24px;top:909px;width:341px;height:1px;background:#fbfbfb;"></div>
<svg class="a" style="left:25px;top:892px;" width="17" height="17" viewBox="0 0 17 17"><rect x="1" y="2" width="4" height="14" fill="#556" stroke="#223"/><rect x="6" y="2" width="4" height="14" fill="#556" stroke="#223"/><rect x="11" y="2" width="4" height="14" fill="#556" stroke="#223"/><path d="M3 11v2M8 11v2M13 11v2" stroke="#fff"/></svg>
<div class="t" style="left:47.00px;top:894.88px;font-size:12.5px;color:#111;">Archives</div>
<div class="a" style="left:24px;top:928px;width:341px;height:1px;background:#fbfbfb;"></div>
<svg class="a" style="left:25px;top:911px;" width="17" height="17" viewBox="0 0 17 17"><path d="M0.5 3.5h5l1.5 1.5h7.5v10h-14z" fill="#f6dc86" stroke="#c9a040"/><rect x="4.5" y="6.5" width="11" height="10" fill="#fff" stroke="#5a6ad0"/><rect x="7" y="8" width="2" height="2" fill="#223"/><rect x="11" y="8" width="2" height="2" fill="#223"/><rect x="7" y="12" width="2" height="2" fill="#223"/><rect x="11" y="12" width="2" height="2" fill="#223"/></svg>
<div class="t" style="left:47.00px;top:913.88px;font-size:12.5px;color:#111;">Scripts</div>
<div class="a" style="left:24px;top:947px;width:341px;height:1px;background:#fbfbfb;"></div>
<svg class="a" style="left:25px;top:930px;" width="17" height="17" viewBox="0 0 17 17"><rect x="1" y="1" width="14" height="15" fill="#fff" stroke="#2a3ab8"/><rect x="1" y="1" width="14" height="2" fill="#2a3ab8"/><text x="4" y="14" font-size="11" font-weight="bold" fill="#112" font-family="Liberation Sans">5</text></svg>
<div class="t" style="left:47.00px;top:932.88px;font-size:12.5px;color:#111;">Planificateur de tâches</div>
<div class="a" style="left:24px;top:966px;width:341px;height:1px;background:#fbfbfb;"></div>
<svg class="a" style="left:25px;top:949px;" width="17" height="17" viewBox="0 0 17 17"><rect x="1" y="5" width="14" height="10" rx="2" fill="none" stroke="#2a4ad8" stroke-width="2"/><path d="M8 8V2M5 4l3-3 3 3" stroke="#2a4ad8" stroke-width="2" fill="none"/></svg>
<div class="t" style="left:47.00px;top:951.88px;font-size:12.5px;color:#111;">Cycles</div>
<div class="a" style="left:24px;top:985px;width:341px;height:1px;background:#fbfbfb;"></div>
<svg class="a" style="left:25px;top:968px;" width="17" height="17" viewBox="0 0 17 17"><path d="M0.5 3.5h5l1.5 1.5h7.5v10h-14z" fill="#f6dc86" stroke="#c9a040"/><rect x="4.5" y="6.5" width="11" height="10" fill="#fff" stroke="#5a6ad0"/><path d="M6 9.5h4M6 11.5h4M6 13.5h4M11.5 8v7M13.5 8v7" stroke="#223"/></svg>
<div class="t" style="left:47.00px;top:970.88px;font-size:12.5px;color:#111;">Journaux</div>
<div class="a" style="left:43px;top:720px;width:159px;height:18px;border:1px dotted #555"></div>
<div class="a" style="left:365px;top:718px;width:18px;height:261px;background:#c6c6c6;"></div>
<div class="a" style="left:366px;top:721px;width:16px;height:17px;background:#f4f4f4;border:1px solid #bdbdbd"></div>
<svg class="a" style="left:369px;top:726px;" width="10" height="7" viewBox="0 0 10 7"><path d="M1 6l4-4 4 4" stroke="#444" stroke-width="1.6" fill="none"/></svg>
<div class="a" style="left:366px;top:737px;width:16px;height:104px;background:#f0f0f0;border:1px solid #bdbdbd"></div>
<svg class="a" style="left:370px;top:787px;" width="8" height="6" viewBox="0 0 8 6"><path d="M0 0.5h8M0 2.5h8M0 4.5h8" stroke="#666"/></svg>
<div class="a" style="left:366px;top:961px;width:16px;height:17px;background:#f4f4f4;border:1px solid #bdbdbd"></div>
<svg class="a" style="left:369px;top:966px;" width="10" height="7" viewBox="0 0 10 7"><path d="M1 1l4 4 4-4" stroke="#444" stroke-width="1.6" fill="none"/></svg>
<div class="a" style="left:383px;top:50px;width:3px;height:929px;background:#1c2333;"></div>
<div class="a" style="left:386px;top:50px;width:1204px;height:24px;background:#b2b2b2;"></div>
<div class="t" style="left:391.00px;top:55.10px;font-size:14px;color:#fdfdfd;-webkit-text-stroke:0.2px #fdfdfd;transform:scaleX(1.0107);transform-origin:left top;">A16M7513-IHM Seul_V13_SP1</div>
<svg class="a" style="left:601px;top:58px;" width="5" height="9" viewBox="0 0 5 9"><path d="M0 0v9l5-4.5z" fill="#fff"/></svg>
<div class="t" style="left:618.00px;top:55.10px;font-size:14px;color:#fdfdfd;-webkit-text-stroke:0.2px #fdfdfd;transform:scaleX(1.1156);transform-origin:left top;">tp900 [TP900 Comfort]</div>
<svg class="a" style="left:789px;top:58px;" width="5" height="9" viewBox="0 0 5 9"><path d="M0 0v9l5-4.5z" fill="#fff"/></svg>
<div class="t" style="left:803.00px;top:55.10px;font-size:14px;color:#fdfdfd;-webkit-text-stroke:0.2px #fdfdfd;transform:scaleX(1.0831);transform-origin:left top;">Vues</div>
<svg class="a" style="left:850px;top:58px;" width="5" height="9" viewBox="0 0 5 9"><path d="M0 0v9l5-4.5z" fill="#fff"/></svg>
<div class="t" style="left:863.00px;top:55.10px;font-size:14px;color:#fdfdfd;-webkit-text-stroke:0.2px #fdfdfd;transform:scaleX(0.9969);transform-origin:left top;">V025_MOUVEMENT_MANUEL</div>
<div class="a" style="left:1519px;top:64px;width:11px;height:3px;background:#fff;"></div>
<svg class="a" style="left:1537px;top:56px;" width="12" height="12" viewBox="0 0 12 12"><rect x="3" y="0" width="9" height="8" fill="#fff"/><rect x="0" y="3" width="9" height="9" fill="#fff" stroke="#b2b2b2" stroke-width="1"/></svg>
<svg class="a" style="left:1556px;top:56px;" width="12" height="12" viewBox="0 0 12 12"><rect x="0" y="0" width="12" height="12" fill="#fff"/><rect x="0" y="1.5" width="12" height="1" fill="#b2b2b2"/></svg>
<svg class="a" style="left:1573px;top:56px;" width="12" height="12" viewBox="0 0 12 12"><path d="M1 1l10 10M11 1L1 11" stroke="#fff" stroke-width="1.8"/></svg>
<div class="a" style="left:386px;top:74px;width:1204px;height:2px;background:#efefef;"></div>
<div class="a" style="left:386px;top:76px;width:1204px;height:25px;background:#cdcdcd;"></div>
<div class="a" style="left:386px;top:101px;width:1204px;height:1px;background:#8c8c8c;"></div>
<div class="a" style="left:386px;top:102px;width:1204px;height:27px;background:#e9e9e9;"></div>
<div class="a" style="left:392px;top:107px;width:112px;height:18px;background:#fff;border:1px solid #a8a8a8"></div>
<div class="t" style="left:397.00px;top:109.80px;font-size:12px;color:#111;transform:scaleX(1.0070);transform-origin:left top;">Tahoma</div>
<div class="a" style="left:486px;top:108px;width:17px;height:16px;background:#e4e4e4;border-left:1px solid #bbb"></div>
<svg class="a" style="left:489px;top:110px;" width="11" height="12" viewBox="0 0 11 12"><rect x="0.5" y="0.5" width="10" height="11" fill="#f6f8ff" stroke="#6a7ad0"/><path d="M2.5 3h6M2.5 5h6M2.5 7h6M2.5 9h6" stroke="#223" stroke-dasharray="1 1"/></svg>
<div class="a" style="left:512px;top:107px;width:38px;height:18px;background:#fff;border:1px solid #a8a8a8"></div>
<div class="t" style="left:515.00px;top:109.80px;font-size:12px;color:#111;">22</div>
<div class="a" style="left:533px;top:108px;width:16px;height:16px;background:#e0e0e0;background:linear-gradient(#f2f2f2,#d6d6d6)"></div>
<svg class="a" style="left:537px;top:114px;" width="8" height="5" viewBox="0 0 8 5"><path d="M0 0h8L4 5z" fill="#111"/></svg>
<div class="t" style="left:562.00px;top:108.25px;font-size:15px;color:#1a2a7a;font-weight:bold;">B</div>
<div class="t" style="left:588.00px;top:108.25px;font-size:15px;color:#1a2a7a;font-style:italic;font-family:"Liberation Serif";font-weight:bold">I</div>
<div class="t" style="left:609.00px;top:108.25px;font-size:15px;color:#1a2a7a;text-decoration:underline">U</div>
<div class="t" style="left:633.00px;top:108.25px;font-size:15px;color:#1a2a7a;text-decoration:line-through">S</div>
<div class="t" style="left:654.00px;top:109.25px;font-size:15px;color:#1a2a7a;">A</div>
<svg class="a" style="left:664px;top:107px;" width="6" height="4" viewBox="0 0 6 4"><path d="M0 4l3-3 3 3" stroke="#111" fill="none" stroke-width="1.2"/></svg>
<svg class="a" style="left:673px;top:109px;" width="7" height="12" viewBox="0 0 7 12"><path d="M3.5 1v7M0.5 5l3 3 3-3M0 11h7" stroke="#111" stroke-width="1.5" fill="none"/></svg>
<svg class="a" style="left:689px;top:108px;" width="17" height="16" viewBox="0 0 17 16"><path d="M1 2h15M1 5h11M1 8h15M1 11h11M1 14h15" stroke="#4a70e0" stroke-width="2"/></svg>
<svg class="a" style="left:710px;top:109px;" width="7" height="12" viewBox="0 0 7 12"><path d="M3.5 1v7M0.5 5l3 3 3-3M0 11h7" stroke="#111" stroke-width="1.5" fill="none"/></svg>
<div class="a" style="left:722px;top:104px;width:1px;height:24px;border-left:1px dotted #aaa"></div>
<div class="t" style="left:729.00px;top:107.40px;font-size:16px;color:#111;">A</div>
<div class="a" style="left:729px;top:122px;width:16px;height:3px;background:#000;"></div>
<svg class="a" style="left:751px;top:109px;" width="7" height="12" viewBox="0 0 7 12"><path d="M3.5 1v7M0.5 5l3 3 3-3M0 11h7" stroke="#111" stroke-width="1.5" fill="none"/></svg>
<svg class="a" style="left:764px;top:107px;" width="17" height="19" viewBox="0 0 17 19"><path d="M3 10l6-6 5 5-6 6z" fill="#8ab0e8" stroke="#334"/><path d="M9 3l2-2" stroke="#223" stroke-width="1.5"/><rect x="1" y="15" width="16" height="3" fill="#e01010"/></svg>
<svg class="a" style="left:786px;top:109px;" width="7" height="12" viewBox="0 0 7 12"><path d="M3.5 1v7M0.5 5l3 3 3-3M0 11h7" stroke="#111" stroke-width="1.5" fill="none"/></svg>
<svg class="a" style="left:799px;top:107px;" width="17" height="19" viewBox="0 0 17 19"><path d="M3 14l9-10 3 3-9 9z" fill="#999"/><rect x="1" y="15" width="14" height="3" fill="#888"/></svg>
<svg class="a" style="left:821px;top:109px;" width="7" height="12" viewBox="0 0 7 12"><path d="M3.5 1v7M0.5 5l3 3 3-3M0 11h7" stroke="#999" stroke-width="1.5" fill="none"/></svg>
<div class="a" style="left:832px;top:104px;width:1px;height:24px;border-left:1px dotted #aaa"></div>
<svg class="a" style="left:840px;top:108px;" width="16" height="16" viewBox="0 0 16 16"><rect x="0" y="2" width="16" height="3" fill="#1a2a6a"/><rect x="0" y="8" width="16" height="3" fill="#1a2a6a"/><rect x="0" y="12" width="16" height="4" fill="#1a2a6a"/></svg>
<svg class="a" style="left:862px;top:109px;" width="7" height="12" viewBox="0 0 7 12"><path d="M3.5 1v7M0.5 5l3 3 3-3M0 11h7" stroke="#111" stroke-width="1.5" fill="none"/></svg>
<div class="a" style="left:875px;top:115px;width:16px;height:3px;background:#1a2a6a;"></div>
<svg class="a" style="left:897px;top:109px;" width="7" height="12" viewBox="0 0 7 12"><path d="M3.5 1v7M0.5 5l3 3 3-3M0 11h7" stroke="#111" stroke-width="1.5" fill="none"/></svg>
<div class="a" style="left:907px;top:104px;width:1px;height:24px;border-left:1px dotted #aaa"></div>
<svg class="a" style="left:915px;top:108px;" width="17" height="17" viewBox="0 0 17 17"><rect x="0" y="6" width="11" height="10" fill="#aaa"/><rect x="5" y="1" width="11" height="10" fill="#1aa01a"/></svg>
<svg class="a" style="left:937px;top:109px;" width="7" height="12" viewBox="0 0 7 12"><path d="M3.5 1v7M0.5 5l3 3 3-3M0 11h7" stroke="#111" stroke-width="1.5" fill="none"/></svg>
<svg class="a" style="left:948px;top:107px;" width="17" height="18" viewBox="0 0 17 18"><path d="M4 10a6 6 0 0110-4" stroke="#2a4ae8" stroke-width="2.5" fill="none"/><path d="M12 2l3 5-5 0z" fill="#2a4ae8"/><path d="M2 16l7-8 3 8z" fill="#8a40d0"/></svg>
<svg class="a" style="left:968px;top:109px;" width="7" height="12" viewBox="0 0 7 12"><path d="M3.5 1v7M0.5 5l3 3 3-3M0 11h7" stroke="#111" stroke-width="1.5" fill="none"/></svg>
<svg class="a" style="left:985px;top:107px;" width="16" height="17" viewBox="0 0 16 17"><rect x="7" y="0" width="2" height="17" fill="#555"/><rect x="2" y="3" width="12" height="5" fill="#777"/><rect x="0" y="10" width="16" height="5" fill="#999"/></svg>
<svg class="a" style="left:1003px;top:109px;" width="7" height="12" viewBox="0 0 7 12"><path d="M3.5 1v7M0.5 5l3 3 3-3M0 11h7" stroke="#999" stroke-width="1.5" fill="none"/></svg>
<svg class="a" style="left:1019px;top:107px;" width="17" height="17" viewBox="0 0 17 17"><rect x="1" y="2" width="3" height="12" fill="#777"/><rect x="7" y="2" width="3" height="12" fill="#777"/><rect x="13" y="2" width="3" height="12" fill="#777"/><path d="M0 16h17" stroke="#555"/></svg>
<svg class="a" style="left:1039px;top:109px;" width="7" height="12" viewBox="0 0 7 12"><path d="M3.5 1v7M0.5 5l3 3 3-3M0 11h7" stroke="#999" stroke-width="1.5" fill="none"/></svg>
<svg class="a" style="left:1054px;top:107px;" width="17" height="17" viewBox="0 0 17 17"><rect x="1" y="6" width="15" height="8" fill="#888"/><path d="M1 3h15M1 3l3-2M16 3l-3-2" stroke="#555"/></svg>
<svg class="a" style="left:1074px;top:109px;" width="7" height="12" viewBox="0 0 7 12"><path d="M3.5 1v7M0.5 5l3 3 3-3M0 11h7" stroke="#999" stroke-width="1.5" fill="none"/></svg>
<div class="a" style="left:1087px;top:104px;width:1px;height:24px;border-left:1px dotted #aaa"></div>
<svg class="a" style="left:1095px;top:107px;" width="17" height="17" viewBox="0 0 17 17"><path d="M14 1l2 2-7 7-2-2z" fill="#2a3ab0"/><path d="M2 12l5-4 3 3-4 5z" fill="#e0a040" stroke="#8a5a20"/></svg>
<svg class="a" style="left:1118px;top:107px;" width="28" height="17" viewBox="0 0 28 17"><path d="M3 12V2M0 5l3-3 3 3" stroke="#111" stroke-width="1.6" fill="none"/><path d="M7 10l4-3h9l-4 3z" fill="#f0d8a0" stroke="#aa8"/><path d="M7 14l4-3h9l-4 3z" fill="#aab" /><path d="M24.5 4v7M21.5 8l3 3 3-3M21 14h7" stroke="#111" stroke-width="1.5" fill="none"/></svg>
<svg class="a" style="left:1154px;top:107px;" width="17" height="17" viewBox="0 0 17 17"><rect x="0.5" y="0.5" width="11" height="11" fill="none" stroke="#223" stroke-dasharray="2 1"/><circle cx="9" cy="9" r="3.5" fill="#cde" stroke="#224"/><path d="M11.5 11.5l4 4" stroke="#3a6ad8" stroke-width="2.2"/></svg>
<div class="a" style="left:386px;top:129px;width:1183px;height:502px;background:#dadada;"></div>
<div class="a" style="left:388px;top:129px;width:75px;height:502px;background:#7a7a7a;"></div>
<div class="a" style="left:463px;top:129px;width:16px;height:502px;background:#6a8599;"></div>
<div class="a" style="left:479px;top:129px;width:894px;height:502px;background:#000;"></div>
<div class="a" style="left:1373px;top:129px;width:17px;height:502px;background:#6a8599;"></div>
<div class="a" style="left:1390px;top:129px;width:75px;height:502px;background:#7a7a7a;"></div>
<div class="a" style="left:1569px;top:129px;width:21px;height:502px;background:#c4c4c4;"></div>
<div class="a" style="left:1569px;top:129px;width:21px;height:17px;background:#f6f6f6;border:1px solid #bdbdbd"></div>
<svg class="a" style="left:1574px;top:134px;" width="10" height="7" viewBox="0 0 10 7"><path d="M1 6l4-4 4 4" stroke="#555" stroke-width="2" fill="none"/></svg>
<div class="a" style="left:1570px;top:224px;width:19px;height:313px;background:#f0f0f0;border:1px solid #c8c8c8;background:linear-gradient(90deg,#f8f8f8,#e4e4e4)"></div>
<svg class="a" style="left:1575px;top:378px;" width="8" height="6" viewBox="0 0 8 6"><path d="M0 0.5h8M0 2.5h8M0 4.5h8" stroke="#666"/></svg>
<div class="a" style="left:1569px;top:613px;width:21px;height:18px;background:#f0f0f0;border:1px solid #bdbdbd"></div>
<svg class="a" style="left:1574px;top:619px;" width="10" height="7" viewBox="0 0 10 7"><path d="M1 1l4 4 4-4" stroke="#555" stroke-width="2" fill="none"/></svg>
<div class="a" style="left:386px;top:631px;width:1183px;height:23px;background:#ececec;"></div>
<div class="a" style="left:386px;top:631px;width:835px;height:23px;background:#dddddd;"></div>
<div class="a" style="left:1229px;top:632px;width:206px;height:17px;background:#fff;border:1px solid #a0a0a0"></div>
<div class="t" style="left:1232.00px;top:635.23px;font-size:11.5px;color:#111;">100%</div>
<div class="a" style="left:1418px;top:633px;width:16px;height:15px;background:#e0e0e0;border-left:1px solid #aaa;background:linear-gradient(#f4f4f4,#d8d8d8)"></div>
<svg class="a" style="left:1422px;top:638px;" width="8" height="5" viewBox="0 0 8 5"><path d="M0 0h8L4 5z" fill="#111"/></svg>
<div class="a" style="left:1457px;top:641px;width:96px;height:1px;background:#777;"></div>
<div class="a" style="left:1457.0px;top:646px;width:1px;height:3px;background:#333;"></div>
<div class="a" style="left:1463.3px;top:646px;width:1px;height:3px;background:#333;"></div>
<div class="a" style="left:1469.6px;top:646px;width:1px;height:3px;background:#333;"></div>
<div class="a" style="left:1475.9px;top:646px;width:1px;height:3px;background:#333;"></div>
<div class="a" style="left:1482.2px;top:646px;width:1px;height:3px;background:#333;"></div>
<div class="a" style="left:1488.5px;top:646px;width:1px;height:3px;background:#333;"></div>
<div class="a" style="left:1494.8px;top:646px;width:1px;height:3px;background:#333;"></div>
<div class="a" style="left:1501.1px;top:646px;width:1px;height:3px;background:#333;"></div>
<div class="a" style="left:1507.4px;top:646px;width:1px;height:3px;background:#333;"></div>
<div class="a" style="left:1513.7px;top:646px;width:1px;height:3px;background:#333;"></div>
<div class="a" style="left:1520.0px;top:646px;width:1px;height:3px;background:#333;"></div>
<div class="a" style="left:1526.3px;top:646px;width:1px;height:3px;background:#333;"></div>
<div class="a" style="left:1532.6px;top:646px;width:1px;height:3px;background:#333;"></div>
<div class="a" style="left:1538.9px;top:646px;width:1px;height:3px;background:#333;"></div>
<div class="a" style="left:1545.2px;top:646px;width:1px;height:3px;background:#333;"></div>
<div class="a" style="left:1551.5px;top:646px;width:1px;height:3px;background:#333;"></div>
<svg class="a" style="left:1484px;top:635px;" width="10" height="13" viewBox="0 0 10 13"><path d="M1 1h8v7l-4 4-4-4z" fill="#ddd" stroke="#888"/></svg>
<svg class="a" style="left:1570px;top:633px;" width="14" height="13" viewBox="0 0 14 13"><rect x="3" y="1" width="10" height="11" fill="#c8d4f8" stroke="#1a2aa0"/><rect x="1" y="3" width="7" height="7" fill="#3a5af0" stroke="#1a2aa0"/></svg>
<div class="a" style="left:1590px;top:50px;width:3px;height:929px;background:#1c2333;"></div>
<div class="a" style="left:528px;top:141px;width:800px;height:480px;background:linear-gradient(90deg,transparent 1px,#c0c0c0 1px) 0px 7px/8px 8px,linear-gradient(transparent 1px,#c0c0c0 1px) 0px 7px/8px 8px,#111;"></div>
<div class="a" style="left:528px;top:141px;width:800px;height:27px;background:linear-gradient(90deg,transparent 1px,#e2e25c 1px) 0px 7px/8px 8px,linear-gradient(transparent 1px,#e2e25c 1px) 0px 7px/8px 8px,#111;"></div>
<div class="a" style="left:528px;top:141px;width:800px;height:1px;background:#eeee99;"></div>
<div class="a" style="left:1327px;top:141px;width:46px;height:158px;background:#6a8599;"></div>
<div class="t" style="left:1383.21px;top:144px;font-size:63.8px;font-weight:bold;color:#000;transform:rotate(90deg) scaleX(0.6608);transform-origin:left top">TOUCH</div>
<div class="t" style="left:704.6px;top:178.52px;font-family:'Liberation Mono',monospace;font-size:23px;color:#1a1a1a;transform:scaleX(1.1623);transform-origin:left top;-webkit-text-stroke:0.35px #c0c0c0">Mode Machine :</div>
<div class="t" style="left:771.3px;top:216.52px;font-family:'Liberation Mono',monospace;font-size:23px;color:#1a1a1a;transform:scaleX(1.1623);transform-origin:left top;-webkit-text-stroke:0.35px #c0c0c0">Mode Axe :</div>
<div class="a" style="left:943px;top:172px;width:126px;height:32px;background:#ffff00;border-top:2px solid #7a7a7a;border-left:2px solid #7a7a7a;border-bottom:1px solid #e4e4e4;border-right:1px solid #e4e4e4"></div>
<div class="a" style="left:943px;top:210px;width:126px;height:35px;background:#ffff00;border-top:2px solid #7a7a7a;border-left:2px solid #7a7a7a;border-bottom:1px solid #e4e4e4;border-right:1px solid #e4e4e4"></div>
<div class="t" style="left:947px;top:178.52px;font-family:'Liberation Mono',monospace;font-size:23px;color:#1a1a1a;transform:scaleX(1.1304);transform-origin:left top;-webkit-text-stroke:0.35px #ffff00">AUTO</div>
<div class="t" style="left:947px;top:217.02px;font-family:'Liberation Mono',monospace;font-size:23px;color:#1a1a1a;transform:scaleX(1.1304);transform-origin:left top;-webkit-text-stroke:0.35px #ffff00">AUTO</div>
<svg class="a" style="left:531.5px;top:256px;" width="68" height="68" viewBox="0 0 68 68"><defs><linearGradient id="rg" x1="0" y1="0" x2="1" y2="1"><stop offset="0" stop-color="#fdfdfd"/><stop offset="0.6" stop-color="#e8e8e8"/><stop offset="1" stop-color="#b8b8b8"/></linearGradient><clipPath id="cl"><circle cx="34" cy="34" r="27"/></clipPath></defs><circle cx="34.6" cy="34.6" r="31.6" fill="#7a7a7a"/><circle cx="34" cy="34" r="31.3" fill="url(#rg)"/><circle cx="34" cy="34" r="28.2" fill="#000"/><circle cx="34" cy="34" r="27" fill="#087018"/><circle cx="43" cy="45" r="24" fill="#0b9614" clip-path="url(#cl)"/><path d="M21 55 Q45 62 57 30" stroke="#8fd08f" stroke-width="1.1" fill="none" opacity="0.55"/></svg>
<svg class="a" style="left:1255px;top:256px;" width="68" height="68" viewBox="0 0 68 68"><defs><linearGradient id="rg" x1="0" y1="0" x2="1" y2="1"><stop offset="0" stop-color="#fdfdfd"/><stop offset="0.6" stop-color="#e8e8e8"/><stop offset="1" stop-color="#b8b8b8"/></linearGradient><clipPath id="cl"><circle cx="34" cy="34" r="27"/></clipPath></defs><circle cx="34.6" cy="34.6" r="31.6" fill="#7a7a7a"/><circle cx="34" cy="34" r="31.3" fill="url(#rg)"/><circle cx="34" cy="34" r="28.2" fill="#000"/><circle cx="34" cy="34" r="27" fill="#087018"/><circle cx="43" cy="45" r="24" fill="#0b9614" clip-path="url(#cl)"/><path d="M21 55 Q45 62 57 30" stroke="#8fd08f" stroke-width="1.1" fill="none" opacity="0.55"/></svg>
<svg class="a" style="left:605px;top:251px;" width="45" height="82" viewBox="0 0 45 82"><path d="M42 2 L3 41 L42 80" stroke="#0000ff" stroke-width="3" fill="#c0c0c0" stroke-linejoin="miter"/><path d="M42 1V81" stroke="#0000ff" stroke-width="3"/></svg>
<div class="a" style="left:648px;top:253px;width:559px;height:77px;background:#fff;border:2px solid #111"></div>
<div class="a" style="left:652px;top:256px;width:180px;height:69px;background:#c0c0c0;"></div>
<div class="a" style="left:1022px;top:256px;width:180px;height:69px;background:#c0c0c0;"></div>
<div class="t" style="left:654.00px;top:262.50px;font-size:20px;color:#000;font-weight:bold;transform:scaleX(1.1360);transform-origin:left top;">Avance</div>
<div class="t" style="left:654.00px;top:301.00px;font-size:20px;color:#000;font-weight:bold;transform:scaleX(1.1497);transform-origin:left top;">avancé</div>
<div class="t" style="left:850.50px;top:264.50px;font-size:20px;color:#000;font-weight:bold;transform:scaleX(1.1664);transform-origin:left top;">Transfert pièce</div>
<div class="a" style="left:853px;top:289px;width:102px;height:37px;background:#c0c0c0;border-top:2px solid #7a7a7a;border-left:2px solid #7a7a7a;border-bottom:1px solid #f0f0f0;border-right:1px solid #f0f0f0"></div>
<div class="t" style="left:882.00px;top:297.85px;font-size:19px;color:#000;transform:scaleX(0.9465);transform-origin:left top;">000,0</div>
<div class="t" style="left:967.00px;top:295.00px;font-size:20px;color:#000;font-weight:bold;transform:scaleX(1.1245);transform-origin:left top;">mm</div>
<div class="t" style="left:1144.53px;top:263.00px;font-size:20px;color:#000;font-weight:bold;transform:scaleX(1.1015);transform-origin:right top;">Recul</div>
<div class="t" style="left:1141.06px;top:301.00px;font-size:20px;color:#000;font-weight:bold;transform:scaleX(1.1538);transform-origin:right top;">reculé</div>
<svg class="a" style="left:1206px;top:251px;" width="45" height="82" viewBox="0 0 45 82"><path d="M3 2 L42 41 L3 80" stroke="#0000ff" stroke-width="3" fill="#c0c0c0"/><path d="M3 1V81" stroke="#0000ff" stroke-width="3"/></svg>
<svg class="a" style="left:531.5px;top:356px;" width="68" height="68" viewBox="0 0 68 68"><defs><linearGradient id="rg" x1="0" y1="0" x2="1" y2="1"><stop offset="0" stop-color="#fdfdfd"/><stop offset="0.6" stop-color="#e8e8e8"/><stop offset="1" stop-color="#b8b8b8"/></linearGradient><clipPath id="cl"><circle cx="34" cy="34" r="27"/></clipPath></defs><circle cx="34.6" cy="34.6" r="31.6" fill="#7a7a7a"/><circle cx="34" cy="34" r="31.3" fill="url(#rg)"/><circle cx="34" cy="34" r="28.2" fill="#000"/><circle cx="34" cy="34" r="27" fill="#087018"/><circle cx="43" cy="45" r="24" fill="#0b9614" clip-path="url(#cl)"/><path d="M21 55 Q45 62 57 30" stroke="#8fd08f" stroke-width="1.1" fill="none" opacity="0.55"/></svg>
<svg class="a" style="left:605px;top:351px;" width="45" height="82" viewBox="0 0 45 82"><path d="M42 2 L3 41 L42 80" stroke="#0000ff" stroke-width="3" fill="#c0c0c0" stroke-linejoin="miter"/><path d="M42 1V81" stroke="#0000ff" stroke-width="3"/></svg>
<div class="a" style="left:648px;top:353px;width:285px;height:77px;background:#fff;border:2px solid #111"></div>
<div class="a" style="left:930px;top:355px;width:3px;height:75px;background:#111;"></div>
<div class="a" style="left:652px;top:356px;width:167px;height:70px;background:#c0c0c0;"></div>
<div class="t" style="left:655.00px;top:362.00px;font-size:20px;color:#000;font-weight:bold;transform:scaleX(1.1355);transform-origin:left top;">Descente</div>
<div class="t" style="left:655.00px;top:400.60px;font-size:20px;color:#000;font-weight:bold;transform:scaleX(1.1330);transform-origin:left top;">Pièce présente</div>
<div class="t" style="left:832.00px;top:377.00px;font-size:20px;color:#000;font-weight:bold;transform:scaleX(1.1939);transform-origin:left top;">Tremie</div>
<svg class="a" style="left:531.5px;top:450px;" width="68" height="68" viewBox="0 0 68 68"><defs><linearGradient id="rg" x1="0" y1="0" x2="1" y2="1"><stop offset="0" stop-color="#fdfdfd"/><stop offset="0.6" stop-color="#e8e8e8"/><stop offset="1" stop-color="#b8b8b8"/></linearGradient><clipPath id="cl"><circle cx="34" cy="34" r="27"/></clipPath></defs><circle cx="34.6" cy="34.6" r="31.6" fill="#7a7a7a"/><circle cx="34" cy="34" r="31.3" fill="url(#rg)"/><circle cx="34" cy="34" r="28.2" fill="#000"/><circle cx="34" cy="34" r="27" fill="#087018"/><circle cx="43" cy="45" r="24" fill="#0b9614" clip-path="url(#cl)"/><path d="M21 55 Q45 62 57 30" stroke="#8fd08f" stroke-width="1.1" fill="none" opacity="0.55"/></svg>
<svg class="a" style="left:1255px;top:450px;" width="68" height="68" viewBox="0 0 68 68"><defs><linearGradient id="rg" x1="0" y1="0" x2="1" y2="1"><stop offset="0" stop-color="#fdfdfd"/><stop offset="0.6" stop-color="#e8e8e8"/><stop offset="1" stop-color="#b8b8b8"/></linearGradient><clipPath id="cl"><circle cx="34" cy="34" r="27"/></clipPath></defs><circle cx="34.6" cy="34.6" r="31.6" fill="#7a7a7a"/><circle cx="34" cy="34" r="31.3" fill="url(#rg)"/><circle cx="34" cy="34" r="28.2" fill="#000"/><circle cx="34" cy="34" r="27" fill="#087018"/><circle cx="43" cy="45" r="24" fill="#0b9614" clip-path="url(#cl)"/><path d="M21 55 Q45 62 57 30" stroke="#8fd08f" stroke-width="1.1" fill="none" opacity="0.55"/></svg>
<svg class="a" style="left:605px;top:444px;" width="45" height="82" viewBox="0 0 45 82"><path d="M42 2 L3 41 L42 80" stroke="#0000ff" stroke-width="3" fill="#c0c0c0" stroke-linejoin="miter"/><path d="M42 1V81" stroke="#0000ff" stroke-width="3"/></svg>
<div class="a" style="left:648px;top:446px;width:559px;height:77px;background:#fff;border:2px solid #111"></div>
<div class="a" style="left:652px;top:449px;width:180px;height:70px;background:#c0c0c0;"></div>
<div class="a" style="left:1022px;top:449px;width:180px;height:70px;background:#c0c0c0;"></div>
<div class="t" style="left:655.00px;top:455.50px;font-size:20px;color:#000;font-weight:bold;transform:scaleX(1.1713);transform-origin:left top;">Montée</div>
<div class="t" style="left:655.00px;top:494.00px;font-size:20px;color:#000;font-weight:bold;transform:scaleX(1.1713);transform-origin:left top;">Montée</div>
<div class="t" style="left:899.00px;top:471.00px;font-size:20px;color:#000;font-weight:bold;transform:scaleX(1.1336);transform-origin:left top;">Butée</div>
<div class="t" style="left:1136.64px;top:455.50px;font-size:20px;color:#000;font-weight:bold;transform:scaleX(1.2153);transform-origin:right top;">Retrait</div>
<div class="t" style="left:1132.18px;top:494.00px;font-size:20px;color:#000;font-weight:bold;transform:scaleX(1.1795);transform-origin:right top;">Retirée</div>
<svg class="a" style="left:1206px;top:444px;" width="45" height="82" viewBox="0 0 45 82"><path d="M3 2 L42 41 L3 80" stroke="#0000ff" stroke-width="3" fill="#c0c0c0"/><path d="M3 1V81" stroke="#0000ff" stroke-width="3"/></svg>
<div class="a" style="left:652px;top:483px;width:6px;height:6px;background:#cfe6ff;border:1px solid #3a7ad0"></div>
<div class="a" style="left:738px;top:483px;width:6px;height:6px;background:#cfe6ff;border:1px solid #3a7ad0"></div>
<div class="a" style="left:826px;top:483px;width:6px;height:6px;background:#cfe6ff;border:1px solid #3a7ad0"></div>
<div class="a" style="left:652px;top:498px;width:6px;height:6px;background:#cfe6ff;border:1px solid #3a7ad0"></div>
<div class="a" style="left:826px;top:498px;width:6px;height:6px;background:#cfe6ff;border:1px solid #3a7ad0"></div>
<div class="a" style="left:652px;top:513px;width:6px;height:6px;background:#cfe6ff;border:1px solid #3a7ad0"></div>
<div class="a" style="left:738px;top:513px;width:6px;height:6px;background:#cfe6ff;border:1px solid #3a7ad0"></div>
<div class="a" style="left:826px;top:513px;width:6px;height:6px;background:#cfe6ff;border:1px solid #3a7ad0"></div>
<div class="t" style="left:856.00px;top:534.58px;font-size:20.5px;color:#5c5c5c;transform:scaleX(1.0826);transform-origin:left top;">Increm.</div>
<div class="a" style="left:934px;top:528px;width:79px;height:33px;border:1px solid #8a8a8a;border-bottom:none;border-right-color:#9a9a9a;background:linear-gradient(90deg,transparent 1px,#dedede 1px) 1px 3px/8px 8px,linear-gradient(transparent 1px,#dedede 1px) 1px 3px/8px 8px,#111;"></div>
<div class="t" style="left:937.00px;top:534.58px;font-size:20.5px;color:#5c5c5c;transform:scaleX(1.0305);transform-origin:left top;">0000</div>
<div class="t" style="left:1016.00px;top:534.58px;font-size:20.5px;color:#5c5c5c;transform:scaleX(1.0451);transform-origin:left top;">microns</div>
<div class="a" style="left:528px;top:561px;width:100px;height:60px;background:#9a9a9a;"></div>
<div class="a" style="left:529px;top:562px;width:98px;height:57px;background:linear-gradient(90deg,transparent 1px,#6666e0 1px) 7px 2px/8px 8px,linear-gradient(transparent 1px,#6666e0 1px) 7px 2px/8px 8px,#111;"></div>
<div class="t" style="left:551.98px;top:568.42px;font-size:19.5px;color:#eeeeff;transform:scaleX(1.0521);transform-origin:center top;">AXES</div>
<div class="t" style="left:549.29px;top:594.92px;font-size:19.5px;color:#eeeeff;transform:scaleX(1.0524);transform-origin:center top;">MANU</div>
<div class="a" style="left:628px;top:561px;width:100px;height:60px;background:#9a9a9a;"></div>
<div class="a" style="left:629px;top:562px;width:98px;height:57px;background:linear-gradient(90deg,transparent 1px,#6666e0 1px) 3px 2px/8px 8px,linear-gradient(transparent 1px,#6666e0 1px) 3px 2px/8px 8px,#111;"></div>
<div class="t" style="left:651.98px;top:568.42px;font-size:19.5px;color:#eeeeff;transform:scaleX(1.0521);transform-origin:center top;">AXES</div>
<div class="t" style="left:654.17px;top:594.92px;font-size:19.5px;color:#eeeeff;transform:scaleX(1.0524);transform-origin:center top;">INCR</div>
<div class="a" style="left:728px;top:561px;width:100px;height:60px;background:#9a9a9a;"></div>
<div class="a" style="left:729px;top:562px;width:98px;height:57px;background:linear-gradient(90deg,transparent 1px,#6666e0 1px) 7px 2px/8px 8px,linear-gradient(transparent 1px,#6666e0 1px) 7px 2px/8px 8px,#111;"></div>
<div class="t" style="left:751.98px;top:568.42px;font-size:19.5px;color:#eeeeff;transform:scaleX(1.0521);transform-origin:center top;">AXES</div>
<div class="t" style="left:751.09px;top:594.92px;font-size:19.5px;color:#eeeeff;transform:scaleX(1.0522);transform-origin:center top;">AUTO</div>
<div class="a" style="left:828px;top:561px;width:100px;height:60px;background:#9a9a9a;"></div>
<div class="a" style="left:829px;top:562px;width:98px;height:57px;background:linear-gradient(90deg,transparent 1px,#6666e0 1px) 3px 2px/8px 8px,linear-gradient(transparent 1px,#6666e0 1px) 3px 2px/8px 8px,#111;"></div>
<div class="t" style="left:861.21px;top:568.42px;font-size:19.5px;color:#eeeeff;transform:scaleX(1.0524);transform-origin:center top;">INC</div>
<div class="t" style="left:867.16px;top:594.92px;font-size:19.5px;color:#eeeeff;transform:scaleX(1.0524);transform-origin:center top;">10</div>
<div class="a" style="left:928px;top:561px;width:100px;height:60px;background:#9a9a9a;"></div>
<div class="a" style="left:929px;top:562px;width:98px;height:57px;background:linear-gradient(90deg,transparent 1px,#6666e0 1px) 7px 2px/8px 8px,linear-gradient(transparent 1px,#6666e0 1px) 7px 2px/8px 8px,#111;"></div>
<div class="t" style="left:961.21px;top:568.42px;font-size:19.5px;color:#eeeeff;transform:scaleX(1.0524);transform-origin:center top;">INC</div>
<div class="t" style="left:961.73px;top:594.92px;font-size:19.5px;color:#eeeeff;transform:scaleX(1.0524);transform-origin:center top;">100</div>
<div class="a" style="left:1028px;top:561px;width:100px;height:60px;background:#9a9a9a;"></div>
<div class="a" style="left:1029px;top:562px;width:98px;height:57px;background:linear-gradient(90deg,transparent 1px,#6666e0 1px) 3px 2px/8px 8px,linear-gradient(transparent 1px,#6666e0 1px) 3px 2px/8px 8px,#111;"></div>
<div class="t" style="left:1061.21px;top:568.42px;font-size:19.5px;color:#eeeeff;transform:scaleX(1.0524);transform-origin:center top;">INC</div>
<div class="t" style="left:1056.31px;top:594.92px;font-size:19.5px;color:#eeeeff;transform:scaleX(1.0524);transform-origin:center top;">1000</div>
<div class="a" style="left:1128px;top:561px;width:100px;height:60px;background:#9a9a9a;"></div>
<div class="a" style="left:1129px;top:562px;width:98px;height:57px;background:#0000ff;"></div>
<div class="t" style="left:1154.64px;top:580.58px;font-size:20.5px;color:#fff;transform:scaleX(1.0441);transform-origin:center top;">Suite</div>
<div class="a" style="left:1228px;top:561px;width:100px;height:60px;background:#9a9a9a;"></div>
<div class="a" style="left:1229px;top:562px;width:98px;height:57px;background:#0000ff;"></div>
<div class="t" style="left:1251.22px;top:580.58px;font-size:20.5px;color:#fff;transform:scaleX(1.0440);transform-origin:center top;">Sortie</div>
<div class="a" style="left:386px;top:654px;width:1204px;height:3px;background:#1c2333;"></div>
<div class="a" style="left:386px;top:657px;width:1204px;height:24px;background:#b2b2b2;"></div>
<div class="t" style="left:391.00px;top:662.10px;font-size:14px;color:#fdfdfd;-webkit-text-stroke:0.2px #fdfdfd;transform:scaleX(1.0094);transform-origin:left top;">OBJECT_7 [Champ de texte]</div>
<div class="a" style="left:1216px;top:660px;width:108px;height:21px;background:#eaeaea;background:linear-gradient(#f8f8f8,#e2e2e2)"></div>
<svg class="a" style="left:1218px;top:662px;" width="17" height="17" viewBox="0 0 17 17"><rect x="1" y="1" width="13" height="15" fill="#eef" stroke="#8a9ae0"/><path d="M3 4h3M3 7h3M3 10h3" stroke="#446"/><circle cx="9" cy="8" r="4" fill="#fff" stroke="#223" stroke-width="1.5"/><path d="M12 11l4 4" stroke="#3a6ad8" stroke-width="2"/></svg>
<div class="t" style="left:1235.00px;top:664.67px;font-size:14.5px;color:#111;-webkit-text-stroke:0.35px #111;transform:scaleX(1.0442);transform-origin:left top;">Propriétés</div>
<div class="a" style="left:1326px;top:660px;width:75px;height:21px;background:#cacaca;border:1px solid #a8a8a8;border-bottom:none;background:linear-gradient(#e2e2e2,#c6c6c6)"></div>
<svg class="a" style="left:1328px;top:662px;" width="17" height="17" viewBox="0 0 17 17"><rect x="1" y="1" width="14" height="15" fill="#fff" stroke="#8a9ae0"/><text x="5" y="13" font-size="11" font-weight="bold" fill="#112" font-family="Liberation Serif">i</text><path d="M1 4h5M4 2l2 2-2 2M10 14h5M13 12l2 2-2 2" stroke="#111" stroke-width="1.3" fill="none"/></svg>
<div class="t" style="left:1348.00px;top:664.67px;font-size:14.5px;color:#6a6a6a;-webkit-text-stroke:0.3px #6a6a6a;transform:scaleX(1.1166);transform-origin:left top;">Info</div>
<svg class="a" style="left:1383px;top:663px;" width="15" height="15" viewBox="0 0 15 15"><circle cx="7.5" cy="7.5" r="7" fill="#f0d020" stroke="#a08000"/><text x="5.5" y="12" font-size="10" font-weight="bold" fill="#111" font-family="Liberation Serif">i</text></svg>
<div class="a" style="left:1403px;top:660px;width:113px;height:21px;background:#cacaca;border:1px solid #a8a8a8;border-bottom:none;background:linear-gradient(#e2e2e2,#c6c6c6)"></div>
<svg class="a" style="left:1407px;top:662px;" width="14" height="17" viewBox="0 0 14 17"><rect x="0.5" y="0.5" width="13" height="16" fill="#fff" stroke="#8a9ae0"/><path d="M4 3v5a2.5 2.5 0 005 0V3M6.5 10.5v3h3" stroke="#223" stroke-width="1.3" fill="none"/><circle cx="10" cy="13" r="1.5" fill="#223"/></svg>
<div class="t" style="left:1425.00px;top:664.67px;font-size:14.5px;color:#6a6a6a;-webkit-text-stroke:0.3px #6a6a6a;transform:scaleX(1.0636);transform-origin:left top;">Diagnostic</div>
<svg class="a" style="left:1537px;top:663px;" width="12" height="12" viewBox="0 0 12 12"><rect x="3" y="0" width="9" height="8" fill="#fff"/><rect x="0" y="3" width="9" height="9" fill="#fff" stroke="#b2b2b2"/></svg>
<svg class="a" style="left:1555px;top:663px;" width="12" height="12" viewBox="0 0 12 12"><rect x="0.5" y="0.5" width="11" height="11" fill="#ddd" stroke="#fff"/><path d="M0 4h12M0 8h12" stroke="#fff"/></svg>
<svg class="a" style="left:1573px;top:664px;" width="13" height="8" viewBox="0 0 13 8"><path d="M0 0h13L6.5 7z" fill="#fff"/></svg>
<div class="a" style="left:386px;top:681px;width:1204px;height:2px;background:#efefef;"></div>
<div class="a" style="left:386px;top:683px;width:1204px;height:26px;background:#cdcdcd;"></div>
<div class="a" style="left:386px;top:708px;width:1204px;height:1px;background:#8c8c8c;"></div>
<div class="a" style="left:392px;top:687px;width:90px;height:21px;background:#dadada;border:1px solid #9a9a9a;background:linear-gradient(#e6e6e6,#d0d0d0)"></div>
<div class="t" style="left:404.00px;top:690.67px;font-size:14.5px;color:#6a6a6a;-webkit-text-stroke:0.3px #6a6a6a;transform:scaleX(1.0906);transform-origin:left top;">Attributs</div>
<div class="a" style="left:484px;top:687px;width:107px;height:22px;background:#ececec;border:1px solid #9a9a9a;border-bottom:none"></div>
<div class="t" style="left:495.00px;top:690.67px;font-size:14.5px;color:#111;-webkit-text-stroke:0.3px #111;transform:scaleX(1.0875);transform-origin:left top;">Animations</div>
<div class="a" style="left:592px;top:687px;width:113px;height:21px;background:#dadada;border:1px solid #9a9a9a;background:linear-gradient(#e6e6e6,#d0d0d0)"></div>
<div class="t" style="left:604.00px;top:690.67px;font-size:14.5px;color:#6a6a6a;-webkit-text-stroke:0.3px #6a6a6a;transform:scaleX(1.0671);transform-origin:left top;">Evénements</div>
<div class="a" style="left:707px;top:687px;width:75px;height:21px;background:#dadada;border:1px solid #9a9a9a;background:linear-gradient(#e6e6e6,#d0d0d0)"></div>
<div class="t" style="left:719.00px;top:690.67px;font-size:14.5px;color:#6a6a6a;-webkit-text-stroke:0.3px #6a6a6a;transform:scaleX(1.0739);transform-origin:left top;">Textes</div>
<div class="a" style="left:386px;top:709px;width:1204px;height:270px;background:#e9e9e9;"></div>
<div class="a" style="left:386px;top:709px;width:173px;height:33px;background:#e6e6e6;"></div>
<div class="a" style="left:386px;top:742px;width:173px;height:1px;background:#f6f6f6;"></div>
<div class="a" style="left:386px;top:761px;width:173px;height:1px;background:#f6f6f6;"></div>
<div class="a" style="left:386px;top:780px;width:173px;height:1px;background:#f6f6f6;"></div>
<div class="a" style="left:386px;top:799px;width:173px;height:1px;background:#f6f6f6;"></div>
<div class="a" style="left:386px;top:818px;width:173px;height:1px;background:#f6f6f6;"></div>
<div class="a" style="left:386px;top:837px;width:173px;height:1px;background:#f6f6f6;"></div>
<div class="a" style="left:386px;top:856px;width:173px;height:1px;background:#f6f6f6;"></div>
<div class="a" style="left:386px;top:875px;width:173px;height:1px;background:#f6f6f6;"></div>
<div class="a" style="left:386px;top:894px;width:173px;height:1px;background:#f6f6f6;"></div>
<div class="a" style="left:386px;top:913px;width:173px;height:1px;background:#f6f6f6;"></div>
<div class="a" style="left:386px;top:932px;width:173px;height:1px;background:#f6f6f6;"></div>
<div class="a" style="left:386px;top:951px;width:173px;height:1px;background:#f6f6f6;"></div>
<div class="t" style="left:423.00px;top:744.88px;font-size:12.5px;color:#111;">Aperçu</div>
<svg class="a" style="left:393px;top:770px;" width="8" height="5" viewBox="0 0 8 5"><path d="M0 0h8L4 5z" fill="#000"/></svg>
<svg class="a" style="left:404px;top:765px;" width="16" height="16" viewBox="0 0 16 16"><rect x="3" y="6" width="12" height="9" fill="#eee" stroke="#999"/><circle cx="7" cy="4" r="3" fill="#3a5ad8"/><path d="M3 4h8" stroke="#fff"/></svg>
<div class="t" style="left:423.00px;top:763.88px;font-size:12.5px;color:#111;">Affichage</div>
<svg class="a" style="left:420px;top:783px;" width="16" height="16" viewBox="0 0 16 16"><rect x="1" y="5" width="11" height="10" fill="#2a3ed8"/><circle cx="12" cy="4" r="3" fill="#f8f040"/></svg>
<div class="t" style="left:439.00px;top:782.88px;font-size:12.5px;color:#111;">Ajouter une nouv...</div>
<div class="a" style="left:437px;top:800px;width:88px;height:19px;background:#c8d0de;"></div>
<svg class="a" style="left:421px;top:802px;" width="16" height="16" viewBox="0 0 16 16"><rect x="1" y="2" width="9" height="7" fill="#fff" stroke="#667"/><rect x="5" y="7" width="10" height="8" fill="#4a6ae8" stroke="#2a3ab8"/></svg>
<div class="t" style="left:439.00px;top:801.88px;font-size:12.5px;color:#111;">Représentation</div>
<svg class="a" style="left:395px;top:825px;" width="5" height="8" viewBox="0 0 5 8"><path d="M0 0v8l5-4z" fill="#000"/></svg>
<svg class="a" style="left:405px;top:821px;" width="16" height="16" viewBox="0 0 16 16"><path d="M3 13l8-8" stroke="#223" stroke-width="1.5"/><path d="M9 3h6v3" stroke="#3a8ad8" stroke-width="2" fill="none"/><rect x="1" y="13" width="7" height="2" fill="#888"/></svg>
<div class="t" style="left:423.00px;top:820.88px;font-size:12.5px;color:#111;">Déplacements</div>
<div class="a" style="left:559px;top:712px;width:8px;height:267px;background:#e0e0e0;border-left:1px solid #c0c0c0;border-right:1px solid #c0c0c0"></div>
<div class="a" style="left:560px;top:817px;width:6px;height:22px;background:#c8c8c8;"></div>
<svg class="a" style="left:560px;top:825px;" width="5" height="7" viewBox="0 0 5 7"><path d="M5 0v7L0 3.5z" fill="#111"/></svg>
<div class="a" style="left:560px;top:850px;width:6px;height:24px;background:#c8c8c8;"></div>
<svg class="a" style="left:561px;top:858px;" width="5" height="7" viewBox="0 0 5 7"><path d="M0 0v7l5-3.5z" fill="#111"/></svg>
<div class="a" style="left:386px;top:961px;width:173px;height:17px;background:#c8c8c8;"></div>
<div class="a" style="left:388px;top:962px;width:17px;height:16px;background:#f2f2f2;border:1px solid #bbb"></div>
<svg class="a" style="left:393px;top:966px;" width="6" height="9" viewBox="0 0 6 9"><path d="M5 1L1 4.5 5 8" stroke="#444" stroke-width="1.6" fill="none"/></svg>
<div class="a" style="left:408px;top:962px;width:92px;height:16px;background:#f0f0f0;border:1px solid #bbb"></div>
<svg class="a" style="left:450px;top:966px;" width="7" height="8" viewBox="0 0 7 8"><path d="M0.5 0v8M2.5 0v8M4.5 0v8M6.5 0v8" stroke="#555"/></svg>
<div class="a" style="left:540px;top:962px;width:17px;height:16px;background:#f2f2f2;border:1px solid #bbb"></div>
<svg class="a" style="left:545px;top:966px;" width="6" height="9" viewBox="0 0 6 9"><path d="M1 1l4 3.5L1 8" stroke="#444" stroke-width="1.6" fill="none"/></svg>
<div class="t" style="left:579.00px;top:725.38px;font-size:12.5px;color:#222;transform:scaleX(1.1204);transform-origin:left top;">Représentation</div>
<div class="a" style="left:680px;top:736px;width:897px;height:1px;background:#222;"></div>
<div class="a" style="left:579px;top:748px;width:360px;height:77px;background:#cecece;border:1px solid #bdbdbd"></div>
<div class="t" style="left:594.00px;top:754.67px;font-size:14.5px;color:#111;-webkit-text-stroke:0.35px #111;transform:scaleX(1.0744);transform-origin:left top;">Variable</div>
<div class="t" style="left:632.66px;top:781.38px;font-size:12.5px;color:#222;">Nom :</div>
<div class="a" style="left:675px;top:779px;width:224px;height:17px;background:#fff;border:1px solid #9a9a9a"></div>
<div class="t" style="left:680.00px;top:781.73px;font-size:11.5px;color:#111;">B42(1)</div>
<div class="a" style="left:898px;top:779px;width:17px;height:17px;background:#e8e8e8;border:1px solid #aaa"></div>
<svg class="a" style="left:901px;top:782px;" width="11" height="11" viewBox="0 0 11 11"><rect x="0.5" y="0.5" width="10" height="10" fill="#f4f6ff" stroke="#7a8ad8"/><path d="M2.5 3h6M2.5 5h6M2.5 7h6" stroke="#223" stroke-dasharray="1 1"/></svg>
<div class="a" style="left:916px;top:779px;width:17px;height:17px;background:#e8e8e8;border:1px solid #aaa"></div>
<div class="t" style="left:919.00px;top:782.80px;font-size:12px;color:#111;font-weight:bold;">...</div>
<div class="t" style="left:613.20px;top:805.38px;font-size:12.5px;color:#222;">Adresse :</div>
<div class="t" style="left:678.00px;top:805.38px;font-size:12.5px;color:#222;">%I4.2</div>
<div class="a" style="left:952px;top:748px;width:167px;height:101px;background:#cdcdcd;border:1px solid #bdbdbd"></div>
<div class="t" style="left:967.00px;top:754.67px;font-size:14.5px;color:#111;-webkit-text-stroke:0.35px #111;transform:scaleX(1.0500);transform-origin:left top;">Type</div>
<svg class="a" style="left:975px;top:782px;" width="15" height="15" viewBox="0 0 15 15"><defs><radialGradient id="rb" cx="0.5" cy="0.3" r="0.7"><stop offset="0" stop-color="#d8f4ff"/><stop offset="1" stop-color="#2a9ae0"/></radialGradient></defs><circle cx="7.5" cy="7.5" r="6.8" fill="url(#rb)" stroke="#3a6a9a"/><circle cx="7.5" cy="7.5" r="2.4" fill="#1a3a8a"/></svg>
<div class="t" style="left:994.00px;top:782.88px;font-size:12.5px;color:#111;">Plage</div>
<svg class="a" style="left:975px;top:806px;" width="15" height="15" viewBox="0 0 15 15"><defs><linearGradient id="rw" x1="0" y1="0" x2="0" y2="1"><stop offset="0" stop-color="#fff"/><stop offset="1" stop-color="#ccc"/></linearGradient></defs><circle cx="7.5" cy="7.5" r="6.8" fill="url(#rw)" stroke="#555"/></svg>
<div class="t" style="left:994.00px;top:806.88px;font-size:12.5px;color:#111;">Plusieurs bits</div>
<svg class="a" style="left:975px;top:830px;" width="15" height="15" viewBox="0 0 15 15"><circle cx="7.5" cy="7.5" r="6.8" fill="#eee" stroke="#bbb"/></svg>
<div class="t" style="left:994.00px;top:830.88px;font-size:12.5px;color:#999;">Bit unique</div>
<div class="a" style="left:1071px;top:826px;width:42px;height:18px;background:#d6d6d6;border:1px solid #a8a8a8"></div>
<div class="t" style="left:1075.00px;top:828.80px;font-size:12px;color:#888;">0</div>
<div class="a" style="left:1096px;top:827px;width:16px;height:16px;background:#e4e4e4;border-left:1px solid #aaa"></div>
<svg class="a" style="left:1099px;top:829px;" width="10" height="12" viewBox="0 0 10 12"><path d="M1 5l4-4 4 4z M1 7l4 4 4-4z" fill="#777"/></svg>
<div class="a" style="left:579px;top:862px;width:998px;height:19px;background:#e4e4e4;background:linear-gradient(#f4f4f4,#dcdcdc);border-top:1px solid #c8c8c8;border-bottom:1px solid #c8c8c8"></div>
<div class="a" style="left:602px;top:862px;width:1px;height:19px;background:#c8c8c8;"></div>
<div class="a" style="left:717px;top:862px;width:1px;height:19px;background:#c8c8c8;"></div>
<div class="a" style="left:832px;top:862px;width:1px;height:19px;background:#c8c8c8;"></div>
<div class="a" style="left:947px;top:862px;width:1px;height:19px;background:#c8c8c8;"></div>
<div class="a" style="left:1062px;top:862px;width:1px;height:19px;background:#c8c8c8;"></div>
<div class="t" style="left:606.00px;top:865.80px;font-size:12px;color:#222;">Plage</div>
<svg class="a" style="left:641px;top:869px;" width="9" height="6" viewBox="0 0 9 6"><path d="M0 6l4.5-5L9 6z" fill="#111"/></svg>
<div class="t" style="left:721.00px;top:865.80px;font-size:12px;color:#222;transform:scaleX(0.9811);transform-origin:left top;">Couleur  d’arrière-p..</div>
<div class="t" style="left:836.00px;top:865.80px;font-size:12px;color:#222;transform:scaleX(0.9960);transform-origin:left top;">Couleur  d’avant-pl..</div>
<div class="t" style="left:951.00px;top:865.80px;font-size:12px;color:#222;transform:scaleX(1.0180);transform-origin:left top;">Clignotement</div>
<div class="a" style="left:602px;top:881px;width:975px;height:76px;background:#f0f0f0;"></div>
<div class="a" style="left:579px;top:881px;width:23px;height:18px;background:#c9d3e0;"></div>
<div class="a" style="left:602px;top:899px;width:975px;height:1px;background:#fbfbfb;"></div>
<div class="a" style="left:579px;top:900px;width:23px;height:18px;background:#c9c9c9;"></div>
<div class="a" style="left:602px;top:918px;width:975px;height:1px;background:#fbfbfb;"></div>
<div class="a" style="left:579px;top:919px;width:23px;height:18px;background:#c9c9c9;"></div>
<div class="a" style="left:602px;top:937px;width:975px;height:1px;background:#fbfbfb;"></div>
<div class="a" style="left:579px;top:938px;width:23px;height:18px;background:#c9c9c9;"></div>
<div class="a" style="left:602px;top:956px;width:975px;height:1px;background:#fbfbfb;"></div>
<div class="a" style="left:717px;top:881px;width:1px;height:76px;background:#fbfbfb;"></div>
<div class="a" style="left:832px;top:881px;width:1px;height:76px;background:#fbfbfb;"></div>
<div class="a" style="left:947px;top:881px;width:1px;height:76px;background:#fbfbfb;"></div>
<div class="a" style="left:1062px;top:881px;width:1px;height:76px;background:#fbfbfb;"></div>
<div class="a" style="left:603px;top:882px;width:114px;height:18px;background:#fff;border:1px solid #c0c0c0"></div>
<div class="t" style="left:607.00px;top:885.80px;font-size:12px;color:#111;">1</div>
<div class="a" style="left:699px;top:882px;width:17px;height:17px;background:#e4e4e4;border:1px solid #999;background:linear-gradient(#f2f2f2,#d8d8d8)"></div>
<svg class="a" style="left:703px;top:888px;" width="9" height="5" viewBox="0 0 9 5"><path d="M0 0h9L4.5 5z" fill="#1a1a8a"/></svg>
<div class="a" style="left:719px;top:882px;width:19px;height:17px;background:#ffff00;border:1px solid #444"></div>
<div class="t" style="left:742.00px;top:885.80px;font-size:12px;color:#111;transform:scaleX(1.1652);transform-origin:left top;">255; 255; 0</div>
<div class="a" style="left:814px;top:882px;width:17px;height:17px;background:#e4e4e4;border:1px solid #999;background:linear-gradient(#f2f2f2,#d8d8d8)"></div>
<svg class="a" style="left:818px;top:888px;" width="9" height="5" viewBox="0 0 9 5"><path d="M0 0h9L4.5 5z" fill="#1a1a8a"/></svg>
<div class="a" style="left:834px;top:882px;width:19px;height:17px;background:#000;"></div>
<div class="t" style="left:857.00px;top:885.80px;font-size:12px;color:#111;transform:scaleX(1.1087);transform-origin:left top;">0; 0; 0</div>
<div class="a" style="left:929px;top:882px;width:17px;height:17px;background:#e4e4e4;border:1px solid #999;background:linear-gradient(#f2f2f2,#d8d8d8)"></div>
<svg class="a" style="left:933px;top:888px;" width="9" height="5" viewBox="0 0 9 5"><path d="M0 0h9L4.5 5z" fill="#1a1a8a"/></svg>
<div class="t" style="left:952.00px;top:885.80px;font-size:12px;color:#111;">Non</div>
<div class="a" style="left:1044px;top:882px;width:17px;height:17px;background:#e4e4e4;border:1px solid #999;background:linear-gradient(#f2f2f2,#d8d8d8)"></div>
<svg class="a" style="left:1048px;top:888px;" width="9" height="5" viewBox="0 0 9 5"><path d="M0 0h9L4.5 5z" fill="#1a1a8a"/></svg>
<div class="t" style="left:607.00px;top:904.80px;font-size:12px;color:#111;">&lt;ajouter&gt;</div>
<div class="a" style="left:1593px;top:50px;width:302px;height:24px;background:#b2b2b2;"></div>
<div class="t" style="left:1598.00px;top:55.10px;font-size:14px;color:#fdfdfd;-webkit-text-stroke:0.2px #fdfdfd;transform:scaleX(1.0468);transform-origin:left top;">Accessoires</div>
<svg class="a" style="left:1847px;top:56px;" width="12" height="12" viewBox="0 0 12 12"><rect x="3" y="0" width="9" height="8" fill="#fff"/><rect x="0" y="3" width="9" height="9" fill="#fff" stroke="#b2b2b2"/></svg>
<svg class="a" style="left:1865px;top:56px;" width="12" height="12" viewBox="0 0 12 12"><rect x="0.5" y="0.5" width="3" height="11" fill="none" stroke="#fff"/><path d="M5 0v12M7 0v12M9 0v12M11 0v12" stroke="#ddd"/></svg>
<svg class="a" style="left:1882px;top:56px;" width="8" height="12" viewBox="0 0 8 12"><path d="M0 0v12l8-6z" fill="#fff"/></svg>
<div class="a" style="left:1593px;top:74px;width:302px;height:2px;background:#efefef;"></div>
<div class="a" style="left:1593px;top:76px;width:302px;height:25px;background:#e6e6e6;background:linear-gradient(#f6f6f6,#dedede)"></div>
<div class="t" style="left:1598.00px;top:82.67px;font-size:14.5px;color:#111;-webkit-text-stroke:0.3px #111;transform:scaleX(1.0007);transform-origin:left top;">Options</div>
<div class="a" style="left:1593px;top:100px;width:302px;height:1px;background:#a8a8a8;"></div>
<div class="a" style="left:1593px;top:101px;width:302px;height:27px;background:#ececec;"></div>
<svg class="a" style="left:1603px;top:106px;" width="10" height="15" viewBox="0 0 10 15"><path d="M1 1v12l3-3 2.5 4.5 2-1L6 9h4z" fill="#1a1a5a"/></svg>
<svg class="a" style="left:1624px;top:105px;" width="18" height="17" viewBox="0 0 18 17"><path d="M6 10q-1-3 3-3t3 3M4 12h10v3H4z" fill="#d8b030" stroke="#8a7010"/><circle cx="9" cy="5" r="3" fill="#e8c040" stroke="#8a7010"/></svg>
<svg class="a" style="left:1647px;top:105px;" width="17" height="17" viewBox="0 0 17 17"><rect x="1" y="3" width="10" height="13" fill="#eee" stroke="#aaa"/><path d="M3 6h2M3 9h2M3 12h2M7 12h2" stroke="#556" stroke-width="1.5"/><path d="M12 16V8M10 3v3l2 1.5 2-1.5V3" stroke="#666" stroke-width="2.2" fill="none"/></svg>
<svg class="a" style="left:1672px;top:105px;" width="16" height="17" viewBox="0 0 16 17"><rect x="0.5" y="1.5" width="15" height="15" fill="#fff" stroke="#1a3aa0"/><rect x="0.5" y="1.5" width="15" height="3" fill="#1a3aa0"/><path d="M2 7h12M2 10h12M2 13h12M5 5v11M9 5v11" stroke="#4a6ad8"/></svg>
<div class="a" style="left:1695px;top:106px;width:120px;height:17px;background:#fff;border:1px solid #a0a0a0"></div>
<div class="t" style="left:1699.00px;top:108.88px;font-size:12.5px;color:#111;transform:scaleX(0.9922);transform-origin:left top;">Valeurs par défau</div>
<div class="a" style="left:1797px;top:107px;width:17px;height:15px;background:#e2e2e2;border-left:1px solid #aaa;background:linear-gradient(#f4f4f4,#d6d6d6)"></div>
<svg class="a" style="left:1801px;top:112px;" width="9" height="5" viewBox="0 0 9 5"><path d="M0 0h9L4.5 5z" fill="#111"/></svg>
<svg class="a" style="left:1875px;top:105px;" width="16" height="15" viewBox="0 0 16 15"><rect x="0.5" y="0.5" width="15" height="13" fill="#f4f6ff" stroke="#8a9ae0"/><rect x="0.5" y="10" width="15" height="3.5" fill="#c8d0f0" stroke="#8a9ae0"/></svg>
<div class="a" style="left:1593px;top:128px;width:302px;height:851px;background:#f0f0f0;"></div>
<div class="a" style="left:1593px;top:128px;width:302px;height:2px;background:#a4a4a4;"></div>
<div class="a" style="left:1593px;top:130px;width:302px;height:20px;background:#e0e0e0;background:linear-gradient(#f4f4f4 0%,#e4e4e4 60%,#d8d8d8 100%)"></div>
<div class="a" style="left:1613px;top:130px;width:1px;height:20px;background:#a8a8a8;"></div>
<div class="a" style="left:1593px;top:150px;width:302px;height:1px;background:#a0a0a0;"></div>
<svg class="a" style="left:1598px;top:137px;" width="11" height="7" viewBox="0 0 11 7"><path d="M1 1l4.5 4.5L10 1" stroke="#111" stroke-width="2" fill="none"/></svg>
<div class="t" style="left:1618.50px;top:132.75px;font-size:15px;color:#111;-webkit-text-stroke:0.3px #111;transform:scaleX(1.0158);transform-origin:left top;">Objets de base</div>
<svg class="a" style="left:1602px;top:158px;" width="24" height="28" viewBox="0 0 24 28"><path d="M1 26L22 3" stroke="#4a5ae0" stroke-width="1.5"/></svg>
<svg class="a" style="left:1641px;top:158px;" width="28" height="28" viewBox="0 0 28 28"><path d="M1 26L16 2V14L27 26z" stroke="#4a5ae0" stroke-width="1.3" fill="none"/></svg>
<svg class="a" style="left:1683px;top:158px;" width="28" height="28" viewBox="0 0 28 28"><defs><linearGradient id="bg1" x1="0" y1="0" x2="0" y2="1"><stop offset="0" stop-color="#aab8ff"/><stop offset="1" stop-color="#4a5ae8"/></linearGradient></defs><path d="M1 27L16 2V14L28 27z" fill="url(#bg1)" stroke="#6a7ae8" stroke-width="0.8"/></svg>
<svg class="a" style="left:1725px;top:163px;" width="29" height="18" viewBox="0 0 29 18"><ellipse cx="14.5" cy="9" rx="14" ry="8" fill="url(#bg1)" stroke="#6a7ae8"/></svg>
<svg class="a" style="left:1767px;top:157px;" width="29" height="30" viewBox="0 0 29 30"><circle cx="14.5" cy="15" r="14" fill="url(#bg1)" stroke="#6a7ae8"/></svg>
<svg class="a" style="left:1809px;top:160px;" width="29" height="24" viewBox="0 0 29 24"><rect x="0.5" y="0.5" width="28" height="22" fill="url(#bg1)" stroke="#6a7ae8"/></svg>
<div class="t" style="left:1855.00px;top:160.90px;font-size:26px;color:#1a1a5a;transform:scaleX(1.0955);transform-origin:left top;">A</div>
<svg class="a" style="left:1599px;top:194px;" width="29" height="27" viewBox="0 0 29 27"><rect x="0.5" y="0.5" width="27" height="25" fill="#fff" stroke="#9aa"/><rect x="0" y="24" width="28" height="3" fill="#8a9ae0"/><circle cx="10" cy="7" r="3.3" fill="#f0a020"/><path d="M3 21l7-9 4 5 4-5 7 9z" fill="#2a3ed8"/></svg>
<div class="a" style="left:1593px;top:249px;width:302px;height:2px;background:#a4a4a4;"></div>
<div class="a" style="left:1593px;top:251px;width:302px;height:20px;background:#e0e0e0;background:linear-gradient(#f4f4f4 0%,#e4e4e4 60%,#d8d8d8 100%)"></div>
<div class="a" style="left:1613px;top:251px;width:1px;height:20px;background:#a8a8a8;"></div>
<div class="a" style="left:1593px;top:271px;width:302px;height:1px;background:#a0a0a0;"></div>
<svg class="a" style="left:1598px;top:258px;" width="11" height="7" viewBox="0 0 11 7"><path d="M1 1l4.5 4.5L10 1" stroke="#111" stroke-width="2" fill="none"/></svg>
<div class="t" style="left:1618.50px;top:253.75px;font-size:15px;color:#111;-webkit-text-stroke:0.3px #111;transform:scaleX(1.0235);transform-origin:left top;">Eléments</div>
<svg class="a" style="left:1599px;top:280px;" width="29" height="22" viewBox="0 0 29 22"><rect x="0.75" y="0.75" width="27.5" height="19.5" fill="#fff" stroke="#111" stroke-width="1.5"/><text x="2" y="15.5" font-size="12.5" font-weight="bold" fill="#111" font-family="Liberation Sans" textLength="25" lengthAdjust="spacingAndGlyphs">0.12</text></svg>
<svg class="a" style="left:1641px;top:281px;" width="29" height="20" viewBox="0 0 29 20"><rect x="0" y="0" width="29" height="18" fill="#bbb"/><rect x="0" y="0" width="27" height="16" fill="#ddd"/><path d="M0 18h29V0" stroke="#222" stroke-width="2" fill="none"/></svg>
<svg class="a" style="left:1683px;top:281px;" width="29" height="20" viewBox="0 0 29 20"><rect x="0.5" y="0.5" width="17" height="17" fill="#fff" stroke="#6a7ad0"/><text x="2" y="15" font-size="13" font-weight="bold" fill="#112" font-family="Liberation Sans">10</text><rect x="17" y="1" width="11" height="17" fill="#bbb" stroke="#888"/><path d="M19.5 8h6l-3 4z" fill="#111"/></svg>
<svg class="a" style="left:1725px;top:278px;" width="29" height="28" viewBox="0 0 29 28"><rect x="0.5" y="0.5" width="20" height="26" fill="#fff" stroke="#99a"/><circle cx="7" cy="7" r="3" fill="#f0a020"/><path d="M1 24l6-8 4 5 4-5 6 8z" fill="#2a3ed8"/><rect x="21" y="0.5" width="7" height="26" fill="#ddd" stroke="#999"/><path d="M22.5 5l2-3 2 3zM22.5 22l2 3 2-3z" fill="#111"/></svg>
<svg class="a" style="left:1767px;top:278px;" width="29" height="28" viewBox="0 0 29 28"><circle cx="8" cy="8" r="7" fill="#fff" stroke="#8a9ae0" stroke-width="1.5"/><path d="M8 4v4h3" stroke="#112" stroke-width="1.5" fill="none"/><rect x="11" y="9" width="17" height="18" fill="#fff" stroke="#1a3aa0"/><rect x="11" y="9" width="17" height="3" fill="#1a3aa0"/><text x="14" y="25" font-size="13" font-weight="bold" fill="#112" font-family="Liberation Sans">5</text></svg>
<svg class="a" style="left:1809px;top:278px;" width="29" height="28" viewBox="0 0 29 28"><rect x="2" y="1" width="11" height="18" fill="#4a5ae0"/><rect x="2" y="19" width="11" height="8" fill="#2a9a4a"/><path d="M18 3h8M18 8h8M18 13h8M18 18h8M18 23h8" stroke="#888"/></svg>
<svg class="a" style="left:1851px;top:278px;" width="29" height="28" viewBox="0 0 29 28"><rect x="0.5" y="0.5" width="28" height="26" fill="#ddd" stroke="#888"/><text x="3" y="11" font-size="9" font-weight="bold" fill="#111" font-family="Liberation Sans">0</text><path d="M24 3v7" stroke="#111" stroke-width="1.5"/><rect x="4" y="14" width="9" height="9" fill="#7a9ae8"/><rect x="13" y="14" width="11" height="9" fill="#fff" stroke="#999"/></svg>
<svg class="a" style="left:1599px;top:314px;" width="29" height="28" viewBox="0 0 29 28"><rect x="1" y="2" width="27" height="22" fill="#dfe6ff" stroke="#1a2aa0" stroke-width="1.5"/><path d="M14.5 2v22" stroke="#1a2aa0"/><circle cx="8" cy="11" r="4" fill="none" stroke="#1a3aa0" stroke-width="1.5"/><path d="M4 20h8v-4H4z" fill="#3a5ad8"/><path d="M17 8l8 8M25 8l-8 8M21 6v4" stroke="#1a3aa0"/><rect x="11" y="24" width="7" height="3" fill="#1a2aa0"/></svg>
<svg class="a" style="left:1645px;top:314px;" width="20" height="28" viewBox="0 0 20 28"><path d="M7 1v27" stroke="#aaa" stroke-width="1.5"/><rect x="1" y="11" width="10" height="7" fill="#8ab0f0" stroke="#223"/><path d="M11 14v-5M13 3h6M13 8h6M13 13h6M13 18h6M13 23h6" stroke="#555"/></svg>
<svg class="a" style="left:1683px;top:314px;" width="29" height="28" viewBox="0 0 29 28"><circle cx="14.5" cy="14" r="13.5" fill="#8aa0e8" stroke="#4a5ab0"/><path d="M3 14a11.5 11.5 0 0123 0" stroke="#f0e040" stroke-width="3" fill="none"/><path d="M3 14a11.5 11.5 0 012-6" stroke="#3ab03a" stroke-width="3" fill="none"/><path d="M26 14a11.5 11.5 0 00-2-6" stroke="#e04040" stroke-width="3" fill="none"/><path d="M7 5l8 9" stroke="#111" stroke-width="2"/><circle cx="15" cy="14" r="2" fill="#111"/></svg>
<svg class="a" style="left:1725px;top:313px;" width="29" height="29" viewBox="0 0 29 29"><circle cx="14.5" cy="14.5" r="13.5" fill="#fff" stroke="#7a8ae0" stroke-width="1.5"/><path d="M14 5v10h6" stroke="#112" stroke-width="2.5" fill="none"/></svg>
<div class="a" style="left:1593px;top:832px;width:302px;height:2px;background:#a4a4a4;"></div>
<div class="a" style="left:1593px;top:834px;width:302px;height:20px;background:#e0e0e0;background:linear-gradient(#f4f4f4 0%,#e4e4e4 60%,#d8d8d8 100%)"></div>
<div class="a" style="left:1613px;top:834px;width:1px;height:20px;background:#a8a8a8;"></div>
<div class="a" style="left:1593px;top:854px;width:302px;height:1px;background:#a0a0a0;"></div>
<svg class="a" style="left:1598px;top:841px;" width="11" height="7" viewBox="0 0 11 7"><path d="M1 1l4.5 4.5L10 1" stroke="#111" stroke-width="2" fill="none"/></svg>
<div class="t" style="left:1618.50px;top:836.75px;font-size:15px;color:#111;-webkit-text-stroke:0.3px #111;transform:scaleX(1.0077);transform-origin:left top;">Contrôles</div>
<svg class="a" style="left:1599px;top:860px;" width="29" height="30" viewBox="0 0 29 30"><rect x="1" y="1" width="16" height="10" fill="#dfe6ff" stroke="#8a9ae0"/><path d="M1 1l8 5 8-5" fill="none" stroke="#8a9ae0"/><path d="M15 8L28 29H2z" fill="#f8f020" stroke="#c0b000"/><rect x="14" y="14" width="3" height="8" fill="#111"/><rect x="14" y="24" width="3" height="3" fill="#111"/></svg>
<svg class="a" style="left:1641px;top:860px;" width="29" height="28" viewBox="0 0 29 28"><rect x="0.5" y="0.5" width="27" height="25" fill="#f0f2ff" stroke="#99b"/><rect x="0" y="25" width="28" height="2" fill="#8a9ae0"/><path d="M4 3v19h20" stroke="#111" stroke-width="2" fill="none"/><path d="M6 16l6-5 4 3 8-9" stroke="#c040e0" stroke-width="1.5" fill="none"/></svg>
<svg class="a" style="left:1684px;top:860px;" width="28" height="30" viewBox="0 0 28 30"><circle cx="6" cy="3" r="2.5" fill="#111"/><rect x="2" y="6" width="8" height="13" fill="#1a6ab0"/><rect x="3.5" y="19" width="5" height="10" fill="#1a4a80"/><circle cx="20" cy="10" r="6" fill="#e8c040" stroke="#a08010"/><circle cx="20" cy="9" r="2" fill="#fff"/><path d="M20 16v12M20 24l-3 2M20 20l-3 2" stroke="#a08010" stroke-width="2.5"/></svg>
<svg class="a" style="left:1725px;top:860px;" width="29" height="30" viewBox="0 0 29 30"><rect x="0.5" y="0.5" width="26" height="21" fill="#fff" stroke="#1a3a8a"/><rect x="0.5" y="0.5" width="26" height="3" fill="#1a3a8a"/><circle cx="19" cy="20" r="8.5" fill="#3a6ae0" stroke="#1a3aa0"/><path d="M10.5 20h17M19 11.5v17M12 15h14M12 25h14" stroke="#fff" stroke-width="0.8"/><ellipse cx="19" cy="20" rx="4" ry="8.5" fill="none" stroke="#fff" stroke-width="0.8"/></svg>
<svg class="a" style="left:1767px;top:860px;" width="29" height="30" viewBox="0 0 29 30"><rect x="0.5" y="0.5" width="25" height="22" fill="#f4f4ff" stroke="#99b"/><path d="M4 5h4M10 5h4M16 5h4M4 9h4M10 9h4M16 9h4M4 13h4M10 13h4M16 13h4M4 17h4M10 17h4M16 17h4" stroke="#557" stroke-width="2"/><path d="M1 23a4 4 0 008 0h6a4 4 0 008 0l4 3" stroke="#1a2a8a" stroke-width="2.2" fill="none"/></svg>
<svg class="a" style="left:1809px;top:860px;" width="29" height="30" viewBox="0 0 29 30"><path d="M4 1a17 17 0 0022 22z" fill="#2a3ad8"/><path d="M14 23L7 29h16z" fill="#2a3ad8"/><path d="M14 14l10-10" stroke="#111" stroke-width="1.5"/><path d="M25 3l-5 1 4 4z" fill="#111"/></svg>
<svg class="a" style="left:1851px;top:860px;" width="29" height="30" viewBox="0 0 29 30"><rect x="6" y="1" width="22" height="14" fill="#cfe8ff" stroke="#7aa0d0"/><rect x="4" y="4" width="22" height="14" fill="#dff0ff" stroke="#7aa0d0"/><rect x="2" y="7" width="22" height="14" fill="#eef8ff" stroke="#7aa0d0"/><path d="M1 17h24l3-3v12l-3 3H1z" fill="#2a3ae0"/><rect x="9" y="20" width="8" height="3" fill="#fff"/></svg>
<svg class="a" style="left:1599px;top:897px;" width="29" height="28" viewBox="0 0 29 28"><rect x="0.5" y="0.5" width="27" height="25" fill="#fff" stroke="#99b"/><rect x="0" y="25" width="28" height="2" fill="#8a9ae0"/><path d="M4 2v20h20" stroke="#111" stroke-width="2" fill="none"/><path d="M6 16l6-5 4 3 8-8" stroke="#c040e0" stroke-width="1.5" fill="none"/><text x="7" y="9" font-size="8" fill="#111" font-family="Liberation Sans">y</text><text x="19" y="22" font-size="8" fill="#111" font-family="Liberation Sans">x</text></svg>
<svg class="a" style="left:1641px;top:897px;" width="29" height="28" viewBox="0 0 29 28"><rect x="0.5" y="0.5" width="27" height="25" fill="#eef2ff" stroke="#99b"/><rect x="0" y="25" width="28" height="2" fill="#8a9ae0"/><path d="M7 3v8a5 5 0 0010 0V3M12 16v3a4 4 0 008 0v-3" stroke="#111" stroke-width="2" fill="none"/><circle cx="20" cy="15" r="2.5" fill="#fff" stroke="#111" stroke-width="1.5"/></svg>
<svg class="a" style="left:1683px;top:897px;" width="29" height="29" viewBox="0 0 29 29"><circle cx="14.5" cy="14.5" r="13.5" fill="#3aa03a"/><path d="M14.5 1A13.5 13.5 0 001 14.5h13.5z" fill="#e04a2a"/><path d="M28 14.5A13.5 13.5 0 0114.5 28V14.5z" fill="#f0c020"/><path d="M1 14.5A13.5 13.5 0 0014.5 28V14.5z" fill="#3a7ae0"/><circle cx="14.5" cy="14.5" r="8" fill="#fff"/><path d="M11 9l8 5.5-8 5.5z" fill="#1a4ab0"/></svg>
<svg class="a" style="left:1725px;top:900px;" width="29" height="22" viewBox="0 0 29 22"><rect x="1" y="6" width="18" height="14" rx="2" fill="#333a48"/><rect x="3" y="1" width="8" height="5" fill="#333a48"/><path d="M19 10l9-4v14l-9-4z" fill="#333a48"/></svg>
<svg class="a" style="left:1767px;top:897px;" width="29" height="28" viewBox="0 0 29 28"><rect x="0.5" y="0.5" width="27" height="25" fill="#fff" stroke="#99b"/><rect x="0" y="25" width="28" height="2" fill="#8a9ae0"/><rect x="0.5" y="0.5" width="27" height="10" fill="#e01818"/><text x="2" y="9.5" font-size="9.5" font-weight="bold" fill="#fff" font-family="Liberation Sans">PDF</text></svg>
<div class="a" style="left:1593px;top:955px;width:302px;height:2px;background:#a4a4a4;"></div>
<div class="a" style="left:1593px;top:957px;width:302px;height:20px;background:#e0e0e0;background:linear-gradient(#f4f4f4 0%,#e4e4e4 60%,#d8d8d8 100%)"></div>
<div class="a" style="left:1613px;top:957px;width:1px;height:20px;background:#a8a8a8;"></div>
<div class="a" style="left:1593px;top:977px;width:302px;height:1px;background:#a0a0a0;"></div>
<svg class="a" style="left:1600px;top:962px;" width="7" height="11" viewBox="0 0 7 11"><path d="M1 1l4.5 4.5L1 10" stroke="#111" stroke-width="2" fill="none"/></svg>
<div class="t" style="left:1618.50px;top:959.75px;font-size:15px;color:#111;-webkit-text-stroke:0.3px #111;transform:scaleX(1.0031);transform-origin:left top;">Graphiques</div>
<div class="a" style="left:1895px;top:50px;width:25px;height:929px;background:#b0b0b0;"></div>
<div class="a" style="left:1895px;top:50px;width:1px;height:929px;background:#333a44;"></div>
<div class="a" style="left:1897px;top:80px;width:19px;height:120px;background:#f0f0f0;border:1px solid #9a9a9a;border-left:none;background:linear-gradient(90deg,#f0f0f0,#e6e6e6)"></div>
<div class="t" style="left:1913px;top:101.5px;font-size:13px;font-weight:bold;color:#111;transform:rotate(90deg) scaleX(0.992);transform-origin:left top">Accessoires</div>
<svg class="a" style="left:1898px;top:83px;" width="16" height="16" viewBox="0 0 16 16"><circle cx="10" cy="6" r="5.5" fill="#4a6ae8"/><text x="0" y="15" font-size="11" fill="#112" font-family="Liberation Sans">A</text></svg>
<div class="a" style="left:1897px;top:202px;width:19px;height:117px;background:#e0e0e0;border:1px solid #a8a8a8;border-left:none;background:linear-gradient(90deg,#e8e8e8,#d8d8d8)"></div>
<div class="t" style="left:1913px;top:223.5px;font-size:13px;font-weight:bold;color:#6a6a6a;transform:rotate(90deg) scaleX(1.017);transform-origin:left top">Animations</div>
<svg class="a" style="left:1899px;top:204px;" width="15" height="16" viewBox="0 0 15 16"><rect x="8" y="0" width="6" height="4" fill="#3a9ad8"/><rect x="1" y="11" width="6" height="4" fill="#a020d0"/><path d="M10 4l-5 4 5 3" stroke="#223" fill="none"/></svg>
<div class="a" style="left:1897px;top:323px;width:19px;height:114px;background:#e0e0e0;border:1px solid #a8a8a8;border-left:none;background:linear-gradient(90deg,#e8e8e8,#d8d8d8)"></div>
<div class="t" style="left:1913px;top:344.5px;font-size:13px;font-weight:bold;color:#6a6a6a;transform:rotate(90deg) scaleX(1.012);transform-origin:left top">Apparence</div>
<svg class="a" style="left:1899px;top:326px;" width="15" height="16" viewBox="0 0 15 16"><path d="M1 8h9M1 11h9M1 14h9" stroke="#d8a020" stroke-width="2.5"/><path d="M6 1h1M9 1h1M12 1h1M6 4h1M9 4h1M12 4h1M8 7h1M11 7h1" stroke="#223"/></svg>
<div class="a" style="left:1897px;top:440px;width:19px;height:182px;background:#e0e0e0;border:1px solid #a8a8a8;border-left:none;background:linear-gradient(90deg,#e8e8e8,#d8d8d8)"></div>
<div class="t" style="left:1913px;top:461.5px;font-size:13px;font-weight:bold;color:#6a6a6a;transform:rotate(90deg) scaleX(1.023);transform-origin:left top">Instructions du script</div>
<svg class="a" style="left:1899px;top:443px;" width="15" height="16" viewBox="0 0 15 16"><rect x="1" y="7" width="10" height="8" fill="#fff" stroke="#1a3aa0"/><text x="2" y="14" font-size="6" fill="#112" font-family="Liberation Sans">01</text><path d="M8 1l2 2 2-2M10 0v6M7 3h6" stroke="#e020d0"/><path d="M10 6l4 4" stroke="#3a6ad8" stroke-width="2"/></svg>
<div class="a" style="left:1897px;top:625px;width:19px;height:89px;background:#e0e0e0;border:1px solid #a8a8a8;border-left:none;background:linear-gradient(90deg,#e8e8e8,#d8d8d8)"></div>
<div class="t" style="left:1913px;top:646.5px;font-size:13px;font-weight:bold;color:#6a6a6a;transform:rotate(90deg) scaleX(1.027);transform-origin:left top">Tâches</div>
<svg class="a" style="left:1898px;top:628px;" width="16" height="16" viewBox="0 0 16 16"><rect x="1" y="1" width="11" height="14" fill="#f8f0d8" stroke="#c8a050"/><path d="M3 5h7M3 7.5h7M3 10h7" stroke="#223"/><path d="M6 11l3 3 6-7" stroke="#1a9a1a" stroke-width="2.2" fill="none"/></svg>
<div class="a" style="left:1897px;top:716px;width:19px;height:134px;background:#e0e0e0;border:1px solid #a8a8a8;border-left:none;background:linear-gradient(90deg,#e8e8e8,#d8d8d8)"></div>
<div class="t" style="left:1913px;top:737.5px;font-size:13px;font-weight:bold;color:#6a6a6a;transform:rotate(90deg) scaleX(1.024);transform-origin:left top">Bibliothèques</div>
<svg class="a" style="left:1898px;top:719px;" width="16" height="14" viewBox="0 0 16 14"><path d="M1 1q3.5-1 7 1q3.5-2 7-1v11q-3.5-1-7 1q-3.5-2-7-1z" fill="#fff" stroke="#1a3aa0" stroke-width="1.4"/><path d="M8 2v11" stroke="#1a3aa0"/></svg>
<div class="a" style="left:0px;top:979px;width:1920px;height:29px;background:#1b1b1b;"></div>
<svg class="a" style="left:36px;top:986px;" width="10" height="14" viewBox="0 0 10 14"><path d="M9 0v14L1 7z" fill="#fff"/></svg>
<div class="t" style="left:53.00px;top:987.10px;font-size:14px;color:#fff;font-weight:bold;transform:scaleX(1.0019);transform-origin:left top;">Vue du portail</div>
<div class="a" style="left:181px;top:983px;width:113px;height:21px;background:#c9c9c9;"></div>
<svg class="a" style="left:186px;top:986px;" width="16" height="15" viewBox="0 0 16 15"><rect x="1" y="1" width="14" height="13" fill="#fff" stroke="#223a8a"/><path d="M3 5h10M3 8h10M3 11h10" stroke="#e08a20" stroke-width="1.5"/><path d="M6 3v10M10 3v10" stroke="#223a8a"/></svg>
<div class="t" style="left:204.00px;top:987.80px;font-size:12px;color:#222;">Vue d’ensem...</div>
<div class="a" style="left:297px;top:983px;width:113px;height:21px;background:#c9c9c9;"></div>
<svg class="a" style="left:302px;top:987px;" width="16" height="13" viewBox="0 0 16 13"><rect x="1" y="1" width="14" height="11" fill="#dde4ff" stroke="#8a9ae0"/><path d="M1 1l7 6 7-6" fill="none" stroke="#8a9ae0"/></svg>
<div class="t" style="left:320.00px;top:987.80px;font-size:12px;color:#222;">Alarmes IHM</div>
<div class="a" style="left:413px;top:983px;width:113px;height:21px;background:#ffffff;"></div>
<svg class="a" style="left:417px;top:986px;" width="16" height="15" viewBox="0 0 16 15"><rect x="1" y="1" width="13" height="13" fill="#cdd6ee" stroke="#556"/></svg>
<div class="t" style="left:435.00px;top:987.80px;font-size:12px;color:#111;">V025_MOUV...</div>
<svg class="a" style="left:1611px;top:985px;" width="17" height="17" viewBox="0 0 17 17"><circle cx="8.5" cy="8.5" r="8" fill="#1a1adb"/><path d="M4 9l3 3 6-7" stroke="#fff" stroke-width="2.2" fill="none"/></svg>
<div class="t" style="left:1632.00px;top:987.80px;font-size:12px;color:#f0f0f0;transform:scaleX(0.9683);transform-origin:left top;">Le projet A16M7513-IHM Seul_V13_SP...</div>
</body></html>
